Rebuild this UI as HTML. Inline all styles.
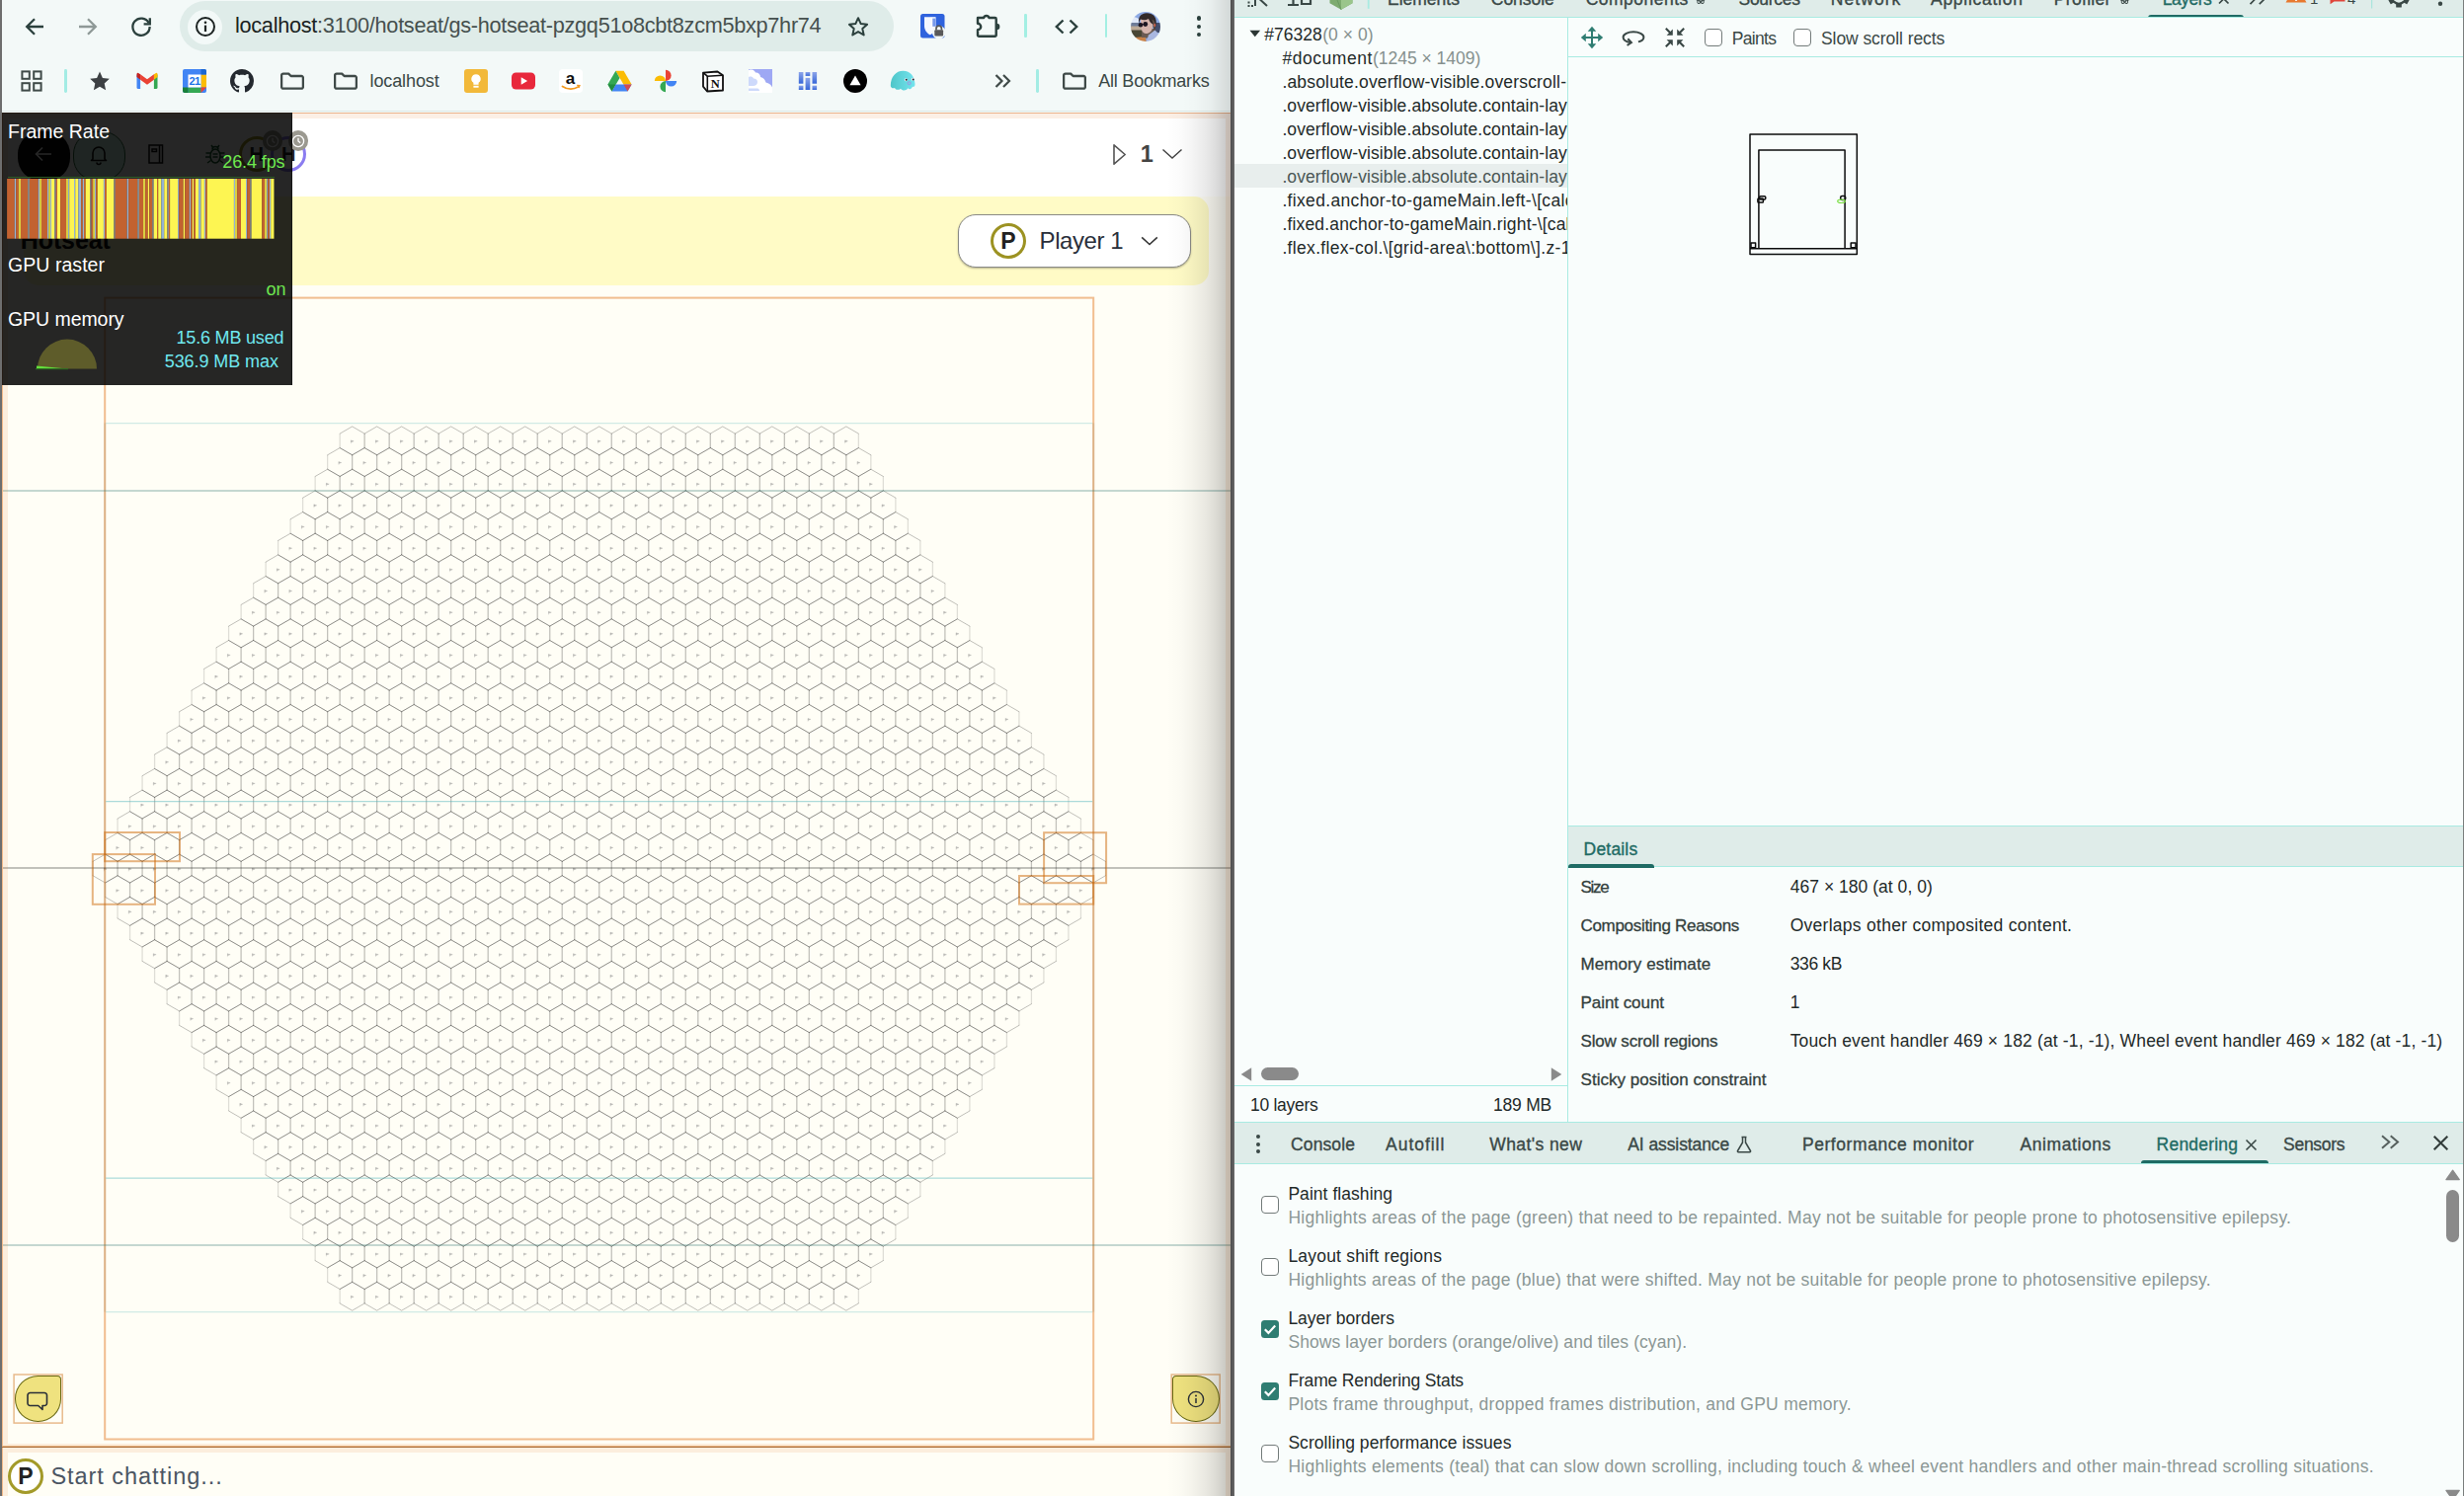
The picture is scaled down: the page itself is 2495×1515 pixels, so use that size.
<!DOCTYPE html><html><head><meta charset="utf-8"><title>Hotseat</title><style>
html,body{margin:0;padding:0}
body{width:2495px;height:1515px;overflow:hidden;position:relative;background:#f9fdfc;font-family:"Liberation Sans",sans-serif}
.t{position:absolute;white-space:nowrap;line-height:1;font-family:"Liberation Sans",sans-serif}
.clip{position:absolute;overflow:hidden}
</style></head><body>
<div style="position:absolute;left:2.00px;top:0.00px;width:1244.00px;height:114.00px;background:#f3f9f8;"></div>
<div style="position:absolute;left:2.00px;top:112.00px;width:1244.00px;height:1.00px;background:#dde9e7;"></div>
<div style="position:absolute;left:182.00px;top:1.00px;width:723.00px;height:51.00px;background:#dfece9;border-radius:25.5px;"></div>
<div style="position:absolute;left:190.00px;top:9.50px;width:35.00px;height:35.00px;background:#f3f9f8;border-radius:50%;"></div>
<svg style="position:absolute;left:23.00px;top:15.00px;" width="24" height="24" viewBox="0 0 24 24"><path d="M21 12H4.5M12 4.2L4.2 12l7.8 7.8" fill="none" stroke="#2b403d" stroke-width="2.3"/></svg>
<svg style="position:absolute;left:77.00px;top:15.00px;" width="24" height="24" viewBox="0 0 24 24"><path d="M3 12h16.5M12 4.2l7.8 7.8-7.8 7.8" fill="none" stroke="#8e9997" stroke-width="2.3"/></svg>
<svg style="position:absolute;left:131.00px;top:15.00px;" width="24" height="24" viewBox="0 0 24 24"><path d="M19.6 8.2A8.6 8.6 0 1 0 20.6 12" fill="none" stroke="#2b403d" stroke-width="2.3"/><path d="M20.8 3.2v6.2h-6.2" fill="none" stroke="#2b403d" stroke-width="2.3"/></svg>
<svg style="position:absolute;left:195.50px;top:15.00px;" width="24" height="24" viewBox="0 0 24 24"><circle cx="12" cy="12" r="9" fill="none" stroke="#1d2423" stroke-width="2"/><rect x="10.9" y="10.6" width="2.2" height="6.4" fill="#1d2423"/><circle cx="12" cy="7.8" r="1.3" fill="#1d2423"/></svg>
<div class="t" style="left:238.00px;top:15.23px;font-size:21.70px;color:#46504e;font-weight:400;letter-spacing:-0.288px;"><span id="t1"><span style="color:#1a2221">localhost</span>:3100/hotseat/gs-hotseat-pzgq51o8cbt8zcm5bxp7hr74</span></div>
<svg style="position:absolute;left:856.80px;top:15.00px;" width="24" height="24" viewBox="0 0 24 24"><path d="M12 3.2l2.7 5.9 6.4.7-4.8 4.3 1.4 6.3L12 17.1l-5.7 3.3 1.4-6.3-4.8-4.3 6.4-.7z" fill="none" stroke="#2b403d" stroke-width="2" stroke-linejoin="round"/></svg>
<svg style="position:absolute;left:932.30px;top:14.00px;" width="24.5" height="24.5" viewBox="0 0 24.5 24.5"><rect width="24.500" height="24.500" rx="2.500" fill="#2f63dd"/><path d="M4 3.300h11.500v9c0 4.500-3 7.700-5.750 9-2.750-1.300-5.750-4.500-5.750-9z" fill="#f4f8ff"/><path d="M12.300 4.600h2.900v8.200h-2.900z" fill="#2f63dd"/><path d="M9.750 3.300h5.750v9c0 4.500-3 7.700-5.750 9z" fill="#fff" opacity=".35"/><circle cx="18.700" cy="18.700" r="6.800" fill="#f2f8f7"/><rect x="14.300" y="16.200" width="8.800" height="6.300" rx="1" fill="#5a5a5a"/><path d="M16 16.500v-1.600a2.700 2.700 0 0 1 5.400 0v1.600" fill="none" stroke="#5a5a5a" stroke-width="1.700"/></svg>
<svg style="position:absolute;left:986.00px;top:12.00px;" width="28" height="28" viewBox="0 0 28 28"><path d="M4 6h6.200a2.700 2.700 0 0 1 5.200 0H21.500a1.200 1.200 0 0 1 1.200 1.200V23.600a1.200 1.200 0 0 1-1.200 1.200H5.200A1.200 1.200 0 0 1 4 23.600V18.200a3.200 3.200 0 0 0 0-6.400z" fill="none" stroke="#2b403d" stroke-width="2.400" stroke-linejoin="round"/><path d="M23.200 11.700a3.200 3.200 0 0 1 0 6.400z" fill="#2b403d"/></svg>
<div style="position:absolute;left:1037.10px;top:14.40px;width:2.60px;height:23.70px;background:#a3efe3;border-radius:1.300px;"></div>
<svg style="position:absolute;left:1067.70px;top:15.00px;" width="24" height="24" viewBox="0 0 24 24"><path d="M8.5 5.5L1.8 12l6.7 6.5M15.5 5.5l6.7 6.5-6.7 6.5" fill="none" stroke="#2b403d" stroke-width="2.4"/></svg>
<div style="position:absolute;left:1118.70px;top:14.40px;width:2.60px;height:23.70px;background:#a3efe3;border-radius:1.300px;"></div>
<svg style="position:absolute;left:1145.00px;top:11.90px;" width="30" height="30" viewBox="0 0 30 30"><defs><clipPath id="avc"><circle cx="15" cy="15" r="15"/></clipPath><filter id="avb" x="-10%" y="-10%" width="120%" height="120%"><feGaussianBlur stdDeviation=".7"/></filter></defs><g clip-path="url(#avc)"><g filter="url(#avb)"><rect x="-3" y="-3" width="36" height="36" fill="#8daae4"/><path d="M-3 6c4-2 8-1 11 1v4H-3z" fill="#dfe8f8"/><rect x="-3" y="11" width="36" height="5" fill="#6d7c98"/><rect x="-3" y="14.500" width="16" height="5" fill="#bba996"/><rect x="24" y="11" width="9" height="10" fill="#424d6c"/><path d="M-3 18.500h14l6 8H-3z" fill="#4a4636"/><path d="M3 26l12-1 1 8H3z" fill="#c8824a"/><rect x="11" y="17" width="14" height="9" fill="#6a5a52"/><path d="M15 33l3-9.500 6.500-5 4.500 4.500-2 10z" fill="#a9b7e0"/><path d="M10 8c0-3 5-4 9-3s4 6 3 11c-.5 3-2.500 5.500-5.500 6-3 .4-5-1.500-5.800-4.500z" fill="#d6b4ad"/><path d="M8.300 11.500C7 6 10 1.500 16 1.300c6-.2 10 3.500 9.800 9.500-.1 3-.6 6-1.800 8-1-1.500-1-3.500-1.200-6-2.500-1-4-3.500-4.800-5.800-2.500 1.500-6 1.500-8 .5-1 1-1.400 2.500-1.700 4z" fill="#30292c"/><path d="M21.500 7.500c2.500 1 3.500 4 3.300 7-.1 2-.5 3.500-1 4.500-.8-1.500-.8-3.500-1-6z" fill="#5e4e45"/><ellipse cx="24.300" cy="13.500" rx="1" ry="1.800" fill="#c8614c"/><circle cx="10" cy="13.300" r="2.300" fill="#1c1420"/><circle cx="14.800" cy="12.500" r="2.400" fill="#1c1420"/><path d="M12 12.600h1" stroke="#1c1420" stroke-width=".8"/></g></g></svg>
<div style="position:absolute;left:1211.70px;top:16.40px;width:4.40px;height:4.40px;background:#2b403d;border-radius:50%;"></div>
<div style="position:absolute;left:1211.70px;top:24.70px;width:4.40px;height:4.40px;background:#2b403d;border-radius:50%;"></div>
<div style="position:absolute;left:1211.70px;top:33.00px;width:4.40px;height:4.40px;background:#2b403d;border-radius:50%;"></div>
<svg style="position:absolute;left:20.00px;top:69.80px;" width="24" height="24" viewBox="0 0 24 24"><g fill="none" stroke="#3f4a48" stroke-width="2"><rect x="2.4" y="2.4" width="7.4" height="7.4"/><rect x="14.2" y="2.4" width="7.4" height="7.4"/><rect x="2.4" y="14.2" width="7.4" height="7.4"/><rect x="14.2" y="14.2" width="7.4" height="7.4"/></g></svg>
<div style="position:absolute;left:65.20px;top:70.00px;width:2.80px;height:23.50px;background:#a3ece4;border-radius:1.4px;"></div>
<svg style="position:absolute;left:89.00px;top:69.80px;" width="24" height="24" viewBox="0 0 24 24"><path d="M12 2.6l2.9 6.3 6.9.8-5.1 4.7 1.4 6.8L12 17.8l-6.1 3.4 1.4-6.8-5.1-4.7 6.9-.8z" fill="#3c4043"/></svg>
<svg style="position:absolute;left:137.00px;top:69.80px;" width="24" height="24" viewBox="0 0 24 24"><path d="M1.5 5.5h3.6V20H3a1.5 1.5 0 0 1-1.5-1.5z" fill="#4285f4"/><path d="M18.9 5.5h3.6v13A1.5 1.5 0 0 1 21 20h-2.1z" fill="#34a853"/><path d="M18.9 5.2l2-1.2a1.1 1.1 0 0 1 1.6 1v3l-3.6 2.7z" fill="#fbbc04"/><path d="M5.1 5.2l-2-1.2a1.1 1.1 0 0 0-1.6 1v3l3.6 2.7z" fill="#c5221f"/><path d="M5.1 5.2v5.5L12 15.8l6.9-5.1V5.2L12 10.3z" fill="#ea4335"/></svg>
<svg style="position:absolute;left:185.00px;top:69.80px;" width="24" height="24" viewBox="0 0 24 24"><rect x="0" y="0" width="24" height="24" rx="2" fill="#4285f4"/><rect x="18.5" y="5.5" width="5.5" height="13" fill="#fbbc04"/><rect x="5.5" y="18.5" width="13" height="5.5" fill="#34a853"/><path d="M0 18.5h5.5V24H2a2 2 0 0 1-2-2z" fill="#188038"/><path d="M18.5 18.5H24L18.5 24z" fill="#ea4335"/><path d="M18.5 0H22a2 2 0 0 1 2 2v3.5h-5.5z" fill="#1967d2"/><rect x="5.5" y="5.5" width="13" height="13" fill="#fff"/><text x="12" y="16.2" font-family="Liberation Sans,sans-serif" font-size="11" font-weight="700" fill="#1a73e8" text-anchor="middle" letter-spacing="-0.6">21</text></svg>
<svg style="position:absolute;left:232.80px;top:69.80px;" width="24" height="24" viewBox="0 0 16 16"><path d="M8 0C3.58 0 0 3.58 0 8c0 3.54 2.29 6.53 5.47 7.59.4.07.55-.17.55-.38 0-.19-.01-.82-.01-1.49-2.01.37-2.53-.49-2.69-.94-.09-.23-.48-.94-.82-1.13-.28-.15-.68-.52-.01-.53.63-.01 1.08.58 1.23.82.72 1.21 1.87.87 2.33.66.07-.52.28-.87.51-1.07-1.78-.2-3.64-.89-3.64-3.95 0-.87.31-1.59.82-2.15-.08-.2-.36-1.02.08-2.12 0 0 .67-.21 2.2.82.64-.18 1.32-.27 2-.27s1.36.09 2 .27c1.53-1.04 2.2-.82 2.2-.82.44 1.1.16 1.92.08 2.12.51.56.82 1.27.82 2.15 0 3.07-1.87 3.75-3.65 3.95.29.25.54.73.54 1.48 0 1.07-.01 1.93-.01 2.2 0 .21.15.46.55.38A8.01 8.01 0 0 0 16 8c0-4.42-3.58-8-8-8z" fill="#24292f"/></svg>
<svg style="position:absolute;left:283.80px;top:69.80px;" width="24" height="24" viewBox="0 0 24 24"><path d="M1.100 6.300a1.700 1.700 0 0 1 1.700-1.700h5.400l2.400 2.400h10.600a1.700 1.700 0 0 1 1.700 1.700v9.300a1.700 1.700 0 0 1-1.700 1.700H2.800a1.700 1.700 0 0 1-1.700-1.700z" fill="none" stroke="#3f4a48" stroke-width="2.300" stroke-linejoin="round"/></svg>
<svg style="position:absolute;left:337.60px;top:69.80px;" width="24" height="24" viewBox="0 0 24 24"><path d="M1.100 6.300a1.700 1.700 0 0 1 1.700-1.700h5.400l2.400 2.400h10.600a1.700 1.700 0 0 1 1.700 1.700v9.300a1.700 1.700 0 0 1-1.700 1.700H2.800a1.700 1.700 0 0 1-1.700-1.700z" fill="none" stroke="#3f4a48" stroke-width="2.300" stroke-linejoin="round"/></svg>
<div class="t" style="left:374.50px;top:72.56px;font-size:18.00px;color:#3a4846;font-weight:400;letter-spacing:-0.106px;"><span id="t2">localhost</span></div>
<svg style="position:absolute;left:469.80px;top:69.80px;" width="24" height="24" viewBox="0 0 24 24"><rect width="24" height="24" rx="3" fill="#f2b93a"/><path d="M12 5.200a4.700 4.700 0 0 0-2.600 8.600v2h5.200v-2A4.700 4.700 0 0 0 12 5.200z" fill="#fff"/><rect x="9.400" y="16.800" width="5.200" height="1.900" fill="#fff"/></svg>
<svg style="position:absolute;left:517.90px;top:69.80px;" width="24" height="24" viewBox="0 0 24 24"><rect x="0" y="3.500" width="24" height="17" rx="4.500" fill="#e8283c"/><path d="M9.700 8.300l6.400 3.700-6.400 3.700z" fill="#fff"/></svg>
<svg style="position:absolute;left:565.90px;top:69.80px;" width="24" height="24" viewBox="0 0 24 24"><rect width="24" height="24" rx="4" fill="#fff"/><text x="11.6" y="14.8" font-family="Liberation Sans,sans-serif" font-size="17" font-weight="700" fill="#111" text-anchor="middle">a</text><path d="M3.500 17.500c5 3.200 11.500 3.200 16.500.3" fill="none" stroke="#f39a1e" stroke-width="1.800" stroke-linecap="round"/><path d="M18.200 16.400l2.700.2-1 2.500" fill="none" stroke="#f39a1e" stroke-width="1.400"/></svg>
<svg style="position:absolute;left:614.50px;top:69.80px;" width="25" height="24" viewBox="0 0 25 24"><path d="M8.400 1.800h8.200l8 13.800h-8.200z" fill="#fbbc04"/><path d="M8.400 1.800L.400 15.600l4.100 7 8-13.700z" fill="#34a853"/><path d="M4.500 22.600l4.100-7h16l-4.100 7z" fill="#4285f4"/><path d="M16.400 15.600h8.200l-4.100 7z" fill="#ea4335" opacity=".85"/><path d="M8.600 15.600L4.500 22.600.400 15.600z" fill="#188038" opacity=".7"/></svg>
<svg style="position:absolute;left:662.00px;top:69.80px;" width="24" height="24" viewBox="0 0 24 24"><path d="M12 12V.800a5.600 5.600 0 0 1 0 11.200z" fill="#ea4335"/><path d="M12 12H.800a5.600 5.600 0 0 1 11.200 0z" fill="#fbbc04"/><path d="M12 12v11.200a5.600 5.600 0 0 1 0-11.200z" fill="#34a853"/><path d="M12 12h11.200a5.600 5.600 0 0 1-11.200 0z" fill="#4285f4"/></svg>
<svg style="position:absolute;left:710.00px;top:69.80px;" width="24" height="24" viewBox="0 0 24 24"><path d="M2 3.600l14.500-1.100 5.500 3.800v15.200l-16 1-4-4.800z" fill="#fff" stroke="#111" stroke-width="1.800" stroke-linejoin="round"/><path d="M2.300 3.800l4 3.400 15.500-1" fill="none" stroke="#111" stroke-width="1.600"/><path d="M6.300 7.200v15" stroke="#111" stroke-width="1.600"/><text x="14.2" y="19.200" font-family="Liberation Serif,serif" font-size="12.500" font-weight="700" fill="#111" text-anchor="middle">N</text></svg>
<svg style="position:absolute;left:758.00px;top:69.70px;" width="24" height="24" viewBox="0 0 24 24"><rect width="24" height="24" fill="#9ea8f4"/><path d="M0 1c3-1 6 0 7 2.500 3 0 5 2 5 4.500 3 .5 5 3 5.500 5.500 3 .5 5.500 2.500 6.500 5V24H0z" fill="#fff"/><path d="M0 8c2-1 4-.5 5 1.500 2.500 0 4 1.500 4 3.500 0 2.500-2 4-4.500 4H0z" fill="#cdd9fb"/><path d="M0 19.500h9c1 0 2 1 2 2.500H0z" fill="#cdd9fb"/></svg>
<svg style="position:absolute;left:806.00px;top:69.80px;" width="24" height="24" viewBox="0 0 24 24"><defs><linearGradient id="bg1" x1="0" y1="0" x2="0" y2="1"><stop offset="0" stop-color="#8ea6ea"/><stop offset="1" stop-color="#3566d8"/></linearGradient></defs><g fill="url(#bg1)"><rect x="2.800" y="3" width="4.600" height="11.700"/><rect x="2.800" y="16.700" width="4.600" height="4.300"/><rect x="9.600" y="3" width="4.700" height="3.900"/><rect x="9.600" y="8.900" width="4.700" height="12.100"/><rect x="16.500" y="3" width="4.600" height="11.700"/><rect x="16.500" y="16.700" width="4.600" height="4.300"/></g></svg>
<svg style="position:absolute;left:854.00px;top:69.80px;" width="24" height="24" viewBox="0 0 24 24"><circle cx="12" cy="12" r="12" fill="#000"/><path d="M12 6.400l5.600 9.800H6.400z" fill="#fff"/></svg>
<svg style="position:absolute;left:901.00px;top:69.80px;" width="27" height="24" viewBox="0 0 27 24"><defs><linearGradient id="tb" x1="0" y1="0" x2="1" y2="0"><stop offset="0" stop-color="#4ec6c9"/><stop offset="1" stop-color="#74e4ee"/></linearGradient></defs><path d="M.8 16.500C1 8 6 1.800 13.500 1.800S25 7.500 25.500 15c.2 2.300-1.200 3.300-2.600 2.800-.8 2.800-3.400 3-4.600 1.400-1.500 2.800-5.500 3-7.300.5-2 1.800-5 1.500-6-.7C3 20 .7 18.800.8 16.500z" fill="url(#tb)"/><circle cx="16.300" cy="10.700" r="1.500" fill="#fff"/><circle cx="23.400" cy="10.300" r="1.500" fill="#fff"/><circle cx="16.700" cy="10.800" r="1" fill="#1a1a2a"/><circle cx="23.700" cy="10.400" r="1" fill="#1a1a2a"/><circle cx="19.600" cy="14.200" r="1.500" fill="none" stroke="#a98be0" stroke-width=".9"/></svg>
<svg style="position:absolute;left:1003.30px;top:69.80px;" width="24" height="24" viewBox="0 0 24 24"><path d="M5.500 6l6 6-6 6M13 6l6 6-6 6" fill="none" stroke="#3f4a48" stroke-width="2.200"/></svg>
<div style="position:absolute;left:1049.00px;top:70.00px;width:2.80px;height:23.50px;background:#a3ece4;border-radius:1.400px;"></div>
<svg style="position:absolute;left:1075.50px;top:69.80px;" width="24" height="24" viewBox="0 0 24 24"><path d="M1.100 6.300a1.700 1.700 0 0 1 1.700-1.700h5.400l2.400 2.400h10.600a1.700 1.700 0 0 1 1.700 1.700v9.300a1.700 1.700 0 0 1-1.700 1.700H2.800a1.700 1.700 0 0 1-1.700-1.700z" fill="none" stroke="#3f4a48" stroke-width="2.300" stroke-linejoin="round"/></svg>
<div class="t" style="left:1112.20px;top:72.56px;font-size:18.00px;color:#3a4846;font-weight:400;letter-spacing:-0.211px;"><span id="t3">All Bookmarks</span></div>
<div style="position:absolute;left:2.00px;top:114.00px;width:1244.00px;height:1401.00px;background:#fffef6;"></div>
<div style="position:absolute;left:2.00px;top:114.00px;width:1244.00px;height:85.00px;background:#ffffff;"></div>
<div style="position:absolute;left:24.00px;top:199.00px;width:1200.00px;height:90.00px;background:#fffbc6;border-radius:15px;"></div>
<div style="position:absolute;left:18.20px;top:132.50px;width:52.80px;height:50.00px;background:#0a0a0a;border-radius:23px;"></div>
<svg style="position:absolute;left:32.00px;top:144.00px;" width="24" height="24" viewBox="0 0 24 24"><path d="M20 12H5M11 5.500L4.500 12l6.500 6.500" fill="none" stroke="#fff" stroke-width="1.600"/></svg>
<div style="position:absolute;left:74.00px;top:132.50px;width:52.50px;height:50.00px;background:#cff5e6;border-radius:23px;box-sizing:border-box;border:1px solid #2c6a40;"></div>
<svg style="position:absolute;left:88.00px;top:144.00px;" width="24" height="24" viewBox="0 0 24 24"><path d="M6 17v-6a6 6 0 0 1 12 0v6l1.500 1.500h-15zM10 20.500a2 2 0 0 0 4 0" fill="none" stroke="#111" stroke-width="1.600" stroke-linejoin="round"/></svg>
<svg style="position:absolute;left:146.00px;top:144.00px;" width="24" height="24" viewBox="0 0 24 24"><path d="M5 3h13.500v18H5zM15.500 3v18M8 7h4.500v2.500H8z" fill="none" stroke="#111" stroke-width="1.500"/></svg>
<svg style="position:absolute;left:206.00px;top:143.00px;" width="24" height="26" viewBox="0 0 24 26"><g fill="none" stroke="#1a5a30" stroke-width="1.500"><ellipse cx="12" cy="15" rx="5" ry="7"/><path d="M9 8.500a3 3 0 0 1 6 0M8 4l2 3M16 4l-2 3M7 12H2.500M7 16H2M7.500 19.500L4 22M17 12h4.500M17 16h5M16.500 19.500L20 22M9.500 13h5M9.500 16h5"/></g></svg>
<div style="position:absolute;left:241.50px;top:137.50px;width:36.00px;height:36.00px;background:#fff;border-radius:50%;box-sizing:border-box;border:3.500px solid #a39a28;"></div>
<div class="t" style="left:252.50px;top:146.07px;font-size:20.00px;color:#222;font-weight:700;letter-spacing:0.000px;"><span id="t4">H</span></div>
<div style="position:absolute;left:274.00px;top:137.50px;width:36.00px;height:36.00px;background:#fff;border-radius:50%;box-sizing:border-box;border:3.500px solid #8b7cf0;"></div>
<div class="t" style="left:285.00px;top:146.07px;font-size:20.00px;color:#222;font-weight:700;letter-spacing:0.000px;"><span id="t5">H</span></div>
<div style="position:absolute;left:265.60px;top:132.20px;width:20.80px;height:20.80px;background:#9b9990;border-radius:50%;"></div>
<svg style="position:absolute;left:269.00px;top:135.60px;" width="14" height="14" viewBox="0 0 14 14"><circle cx="7" cy="7" r="5.600" fill="none" stroke="#fff" stroke-width="1.300"/><path d="M7 3.800V7l2.200 1.600" fill="none" stroke="#fff" stroke-width="1.300"/></svg>
<div style="position:absolute;left:291.60px;top:132.20px;width:20.80px;height:20.80px;background:#9b9990;border-radius:50%;"></div>
<svg style="position:absolute;left:295.00px;top:135.60px;" width="14" height="14" viewBox="0 0 14 14"><circle cx="7" cy="7" r="5.600" fill="none" stroke="#fff" stroke-width="1.300"/><path d="M7 3.800V7l2.200 1.600" fill="none" stroke="#fff" stroke-width="1.300"/></svg>
<div class="t" style="left:20.80px;top:230.84px;font-size:25.00px;color:#111;font-weight:700;letter-spacing:-0.115px;"><span id="t6">Hotseat</span></div>
<svg style="position:absolute;left:1126.00px;top:145.00px;" width="16" height="23" viewBox="0 0 16 23"><path d="M2 1.800L13.200 11.500 2 21.200z" fill="none" stroke="#555" stroke-width="1.600" stroke-linejoin="round"/></svg>
<div class="t" style="left:1154.80px;top:144.61px;font-size:23.50px;color:#444;font-weight:700;letter-spacing:0.000px;"><span id="t7">1</span></div>
<svg style="position:absolute;left:1176.00px;top:150.00px;" width="22" height="12" viewBox="0 0 22 12"><path d="M1.500 1.500L11 10 20.500 1.500" fill="none" stroke="#444" stroke-width="1.450"/></svg>
<div style="position:absolute;left:970.00px;top:217.00px;width:236.00px;height:54.40px;background:#fff;border-radius:18px;box-sizing:border-box;border:1px solid #8a8a86;box-shadow:0 1px 2px rgba(0,0,0,.28);"></div>
<div style="position:absolute;left:1003.00px;top:226.00px;width:36.00px;height:36.00px;background:#fff;border-radius:50%;box-sizing:border-box;border:3.400px solid #9c9222;"></div>
<div class="t" style="left:1013.20px;top:232.53px;font-size:23.00px;color:#222;font-weight:700;letter-spacing:0.000px;"><span id="t8">P</span></div>
<div class="t" style="left:1052.60px;top:231.68px;font-size:24.00px;color:#2a2f3a;font-weight:400;letter-spacing:-0.435px;"><span id="t9">Player 1</span></div>
<svg style="position:absolute;left:1155.00px;top:238.50px;" width="18" height="11" viewBox="0 0 18 11"><path d="M1.200 1.400L9 8.600 16.800 1.400" fill="none" stroke="#333" stroke-width="1.500"/></svg>
<svg style="position:absolute;left:0;top:0" width="1246" height="1515" viewBox="0 0 1246 1515"><defs><g id="hx"><path d="M-12.505 -7.220L0 -14.440L12.505 -7.220M-12.505 7.220L0 14.440L12.505 7.220" fill="none" stroke="#000" stroke-opacity=".28" stroke-width=".9" stroke-linecap="round"/><path d="M-12.505 -7.220V7.220M12.505 -7.220V7.220" fill="none" stroke="#000" stroke-opacity=".125" stroke-width="1.300"/><path d="M-1.200-.5L1.600.5-1.200 1.600zM-1.200-.5v3.400" fill="#8a8a8a" fill-opacity=".5" stroke="#8a8a8a" stroke-opacity=".5" stroke-width=".4"/></g></defs><use href="#hx" x="356.65" y="446.36"/><use href="#hx" x="381.66" y="446.36"/><use href="#hx" x="406.67" y="446.36"/><use href="#hx" x="431.68" y="446.36"/><use href="#hx" x="456.69" y="446.36"/><use href="#hx" x="481.70" y="446.36"/><use href="#hx" x="506.71" y="446.36"/><use href="#hx" x="531.72" y="446.36"/><use href="#hx" x="556.73" y="446.36"/><use href="#hx" x="581.74" y="446.36"/><use href="#hx" x="606.75" y="446.36"/><use href="#hx" x="631.76" y="446.36"/><use href="#hx" x="656.77" y="446.36"/><use href="#hx" x="681.78" y="446.36"/><use href="#hx" x="706.79" y="446.36"/><use href="#hx" x="731.80" y="446.36"/><use href="#hx" x="756.81" y="446.36"/><use href="#hx" x="781.82" y="446.36"/><use href="#hx" x="806.83" y="446.36"/><use href="#hx" x="831.84" y="446.36"/><use href="#hx" x="856.85" y="446.36"/><use href="#hx" x="344.14" y="468.02"/><use href="#hx" x="369.15" y="468.02"/><use href="#hx" x="394.16" y="468.02"/><use href="#hx" x="419.17" y="468.02"/><use href="#hx" x="444.19" y="468.02"/><use href="#hx" x="469.19" y="468.02"/><use href="#hx" x="494.20" y="468.02"/><use href="#hx" x="519.22" y="468.02"/><use href="#hx" x="544.23" y="468.02"/><use href="#hx" x="569.24" y="468.02"/><use href="#hx" x="594.25" y="468.02"/><use href="#hx" x="619.25" y="468.02"/><use href="#hx" x="644.26" y="468.02"/><use href="#hx" x="669.27" y="468.02"/><use href="#hx" x="694.29" y="468.02"/><use href="#hx" x="719.30" y="468.02"/><use href="#hx" x="744.31" y="468.02"/><use href="#hx" x="769.32" y="468.02"/><use href="#hx" x="794.33" y="468.02"/><use href="#hx" x="819.34" y="468.02"/><use href="#hx" x="844.35" y="468.02"/><use href="#hx" x="869.36" y="468.02"/><use href="#hx" x="331.64" y="489.68"/><use href="#hx" x="356.65" y="489.68"/><use href="#hx" x="381.66" y="489.68"/><use href="#hx" x="406.67" y="489.68"/><use href="#hx" x="431.68" y="489.68"/><use href="#hx" x="456.69" y="489.68"/><use href="#hx" x="481.70" y="489.68"/><use href="#hx" x="506.71" y="489.68"/><use href="#hx" x="531.72" y="489.68"/><use href="#hx" x="556.73" y="489.68"/><use href="#hx" x="581.74" y="489.68"/><use href="#hx" x="606.75" y="489.68"/><use href="#hx" x="631.76" y="489.68"/><use href="#hx" x="656.77" y="489.68"/><use href="#hx" x="681.78" y="489.68"/><use href="#hx" x="706.79" y="489.68"/><use href="#hx" x="731.80" y="489.68"/><use href="#hx" x="756.81" y="489.68"/><use href="#hx" x="781.82" y="489.68"/><use href="#hx" x="806.83" y="489.68"/><use href="#hx" x="831.84" y="489.68"/><use href="#hx" x="856.85" y="489.68"/><use href="#hx" x="881.86" y="489.68"/><use href="#hx" x="319.13" y="511.34"/><use href="#hx" x="344.14" y="511.34"/><use href="#hx" x="369.15" y="511.34"/><use href="#hx" x="394.16" y="511.34"/><use href="#hx" x="419.18" y="511.34"/><use href="#hx" x="444.19" y="511.34"/><use href="#hx" x="469.19" y="511.34"/><use href="#hx" x="494.21" y="511.34"/><use href="#hx" x="519.22" y="511.34"/><use href="#hx" x="544.23" y="511.34"/><use href="#hx" x="569.24" y="511.34"/><use href="#hx" x="594.25" y="511.34"/><use href="#hx" x="619.25" y="511.34"/><use href="#hx" x="644.26" y="511.34"/><use href="#hx" x="669.28" y="511.34"/><use href="#hx" x="694.29" y="511.34"/><use href="#hx" x="719.30" y="511.34"/><use href="#hx" x="744.31" y="511.34"/><use href="#hx" x="769.32" y="511.34"/><use href="#hx" x="794.33" y="511.34"/><use href="#hx" x="819.34" y="511.34"/><use href="#hx" x="844.35" y="511.34"/><use href="#hx" x="869.36" y="511.34"/><use href="#hx" x="894.37" y="511.34"/><use href="#hx" x="306.63" y="533.00"/><use href="#hx" x="331.64" y="533.00"/><use href="#hx" x="356.65" y="533.00"/><use href="#hx" x="381.66" y="533.00"/><use href="#hx" x="406.67" y="533.00"/><use href="#hx" x="431.68" y="533.00"/><use href="#hx" x="456.69" y="533.00"/><use href="#hx" x="481.70" y="533.00"/><use href="#hx" x="506.71" y="533.00"/><use href="#hx" x="531.72" y="533.00"/><use href="#hx" x="556.73" y="533.00"/><use href="#hx" x="581.74" y="533.00"/><use href="#hx" x="606.75" y="533.00"/><use href="#hx" x="631.76" y="533.00"/><use href="#hx" x="656.77" y="533.00"/><use href="#hx" x="681.78" y="533.00"/><use href="#hx" x="706.79" y="533.00"/><use href="#hx" x="731.80" y="533.00"/><use href="#hx" x="756.81" y="533.00"/><use href="#hx" x="781.82" y="533.00"/><use href="#hx" x="806.83" y="533.00"/><use href="#hx" x="831.84" y="533.00"/><use href="#hx" x="856.85" y="533.00"/><use href="#hx" x="881.86" y="533.00"/><use href="#hx" x="906.87" y="533.00"/><use href="#hx" x="294.12" y="554.66"/><use href="#hx" x="319.13" y="554.66"/><use href="#hx" x="344.14" y="554.66"/><use href="#hx" x="369.15" y="554.66"/><use href="#hx" x="394.17" y="554.66"/><use href="#hx" x="419.18" y="554.66"/><use href="#hx" x="444.19" y="554.66"/><use href="#hx" x="469.20" y="554.66"/><use href="#hx" x="494.21" y="554.66"/><use href="#hx" x="519.22" y="554.66"/><use href="#hx" x="544.23" y="554.66"/><use href="#hx" x="569.24" y="554.66"/><use href="#hx" x="594.25" y="554.66"/><use href="#hx" x="619.25" y="554.66"/><use href="#hx" x="644.27" y="554.66"/><use href="#hx" x="669.28" y="554.66"/><use href="#hx" x="694.29" y="554.66"/><use href="#hx" x="719.30" y="554.66"/><use href="#hx" x="744.31" y="554.66"/><use href="#hx" x="769.32" y="554.66"/><use href="#hx" x="794.33" y="554.66"/><use href="#hx" x="819.34" y="554.66"/><use href="#hx" x="844.35" y="554.66"/><use href="#hx" x="869.36" y="554.66"/><use href="#hx" x="894.37" y="554.66"/><use href="#hx" x="919.38" y="554.66"/><use href="#hx" x="281.62" y="576.32"/><use href="#hx" x="306.63" y="576.32"/><use href="#hx" x="331.64" y="576.32"/><use href="#hx" x="356.65" y="576.32"/><use href="#hx" x="381.66" y="576.32"/><use href="#hx" x="406.67" y="576.32"/><use href="#hx" x="431.68" y="576.32"/><use href="#hx" x="456.69" y="576.32"/><use href="#hx" x="481.70" y="576.32"/><use href="#hx" x="506.71" y="576.32"/><use href="#hx" x="531.72" y="576.32"/><use href="#hx" x="556.73" y="576.32"/><use href="#hx" x="581.74" y="576.32"/><use href="#hx" x="606.75" y="576.32"/><use href="#hx" x="631.76" y="576.32"/><use href="#hx" x="656.77" y="576.32"/><use href="#hx" x="681.78" y="576.32"/><use href="#hx" x="706.79" y="576.32"/><use href="#hx" x="731.80" y="576.32"/><use href="#hx" x="756.81" y="576.32"/><use href="#hx" x="781.82" y="576.32"/><use href="#hx" x="806.83" y="576.32"/><use href="#hx" x="831.84" y="576.32"/><use href="#hx" x="856.85" y="576.32"/><use href="#hx" x="881.86" y="576.32"/><use href="#hx" x="906.87" y="576.32"/><use href="#hx" x="931.88" y="576.32"/><use href="#hx" x="269.11" y="597.98"/><use href="#hx" x="294.12" y="597.98"/><use href="#hx" x="319.13" y="597.98"/><use href="#hx" x="344.14" y="597.98"/><use href="#hx" x="369.15" y="597.98"/><use href="#hx" x="394.16" y="597.98"/><use href="#hx" x="419.17" y="597.98"/><use href="#hx" x="444.18" y="597.98"/><use href="#hx" x="469.19" y="597.98"/><use href="#hx" x="494.20" y="597.98"/><use href="#hx" x="519.21" y="597.98"/><use href="#hx" x="544.22" y="597.98"/><use href="#hx" x="569.23" y="597.98"/><use href="#hx" x="594.24" y="597.98"/><use href="#hx" x="619.25" y="597.98"/><use href="#hx" x="644.26" y="597.98"/><use href="#hx" x="669.27" y="597.98"/><use href="#hx" x="694.28" y="597.98"/><use href="#hx" x="719.29" y="597.98"/><use href="#hx" x="744.31" y="597.98"/><use href="#hx" x="769.32" y="597.98"/><use href="#hx" x="794.33" y="597.98"/><use href="#hx" x="819.34" y="597.98"/><use href="#hx" x="844.35" y="597.98"/><use href="#hx" x="869.36" y="597.98"/><use href="#hx" x="894.37" y="597.98"/><use href="#hx" x="919.38" y="597.98"/><use href="#hx" x="944.38" y="597.98"/><use href="#hx" x="256.61" y="619.64"/><use href="#hx" x="281.62" y="619.64"/><use href="#hx" x="306.63" y="619.64"/><use href="#hx" x="331.64" y="619.64"/><use href="#hx" x="356.65" y="619.64"/><use href="#hx" x="381.66" y="619.64"/><use href="#hx" x="406.67" y="619.64"/><use href="#hx" x="431.68" y="619.64"/><use href="#hx" x="456.69" y="619.64"/><use href="#hx" x="481.70" y="619.64"/><use href="#hx" x="506.71" y="619.64"/><use href="#hx" x="531.72" y="619.64"/><use href="#hx" x="556.73" y="619.64"/><use href="#hx" x="581.74" y="619.64"/><use href="#hx" x="606.75" y="619.64"/><use href="#hx" x="631.76" y="619.64"/><use href="#hx" x="656.77" y="619.64"/><use href="#hx" x="681.78" y="619.64"/><use href="#hx" x="706.79" y="619.64"/><use href="#hx" x="731.80" y="619.64"/><use href="#hx" x="756.81" y="619.64"/><use href="#hx" x="781.82" y="619.64"/><use href="#hx" x="806.83" y="619.64"/><use href="#hx" x="831.84" y="619.64"/><use href="#hx" x="856.85" y="619.64"/><use href="#hx" x="881.86" y="619.64"/><use href="#hx" x="906.87" y="619.64"/><use href="#hx" x="931.88" y="619.64"/><use href="#hx" x="956.89" y="619.64"/><use href="#hx" x="244.10" y="641.30"/><use href="#hx" x="269.11" y="641.30"/><use href="#hx" x="294.12" y="641.30"/><use href="#hx" x="319.13" y="641.30"/><use href="#hx" x="344.14" y="641.30"/><use href="#hx" x="369.15" y="641.30"/><use href="#hx" x="394.16" y="641.30"/><use href="#hx" x="419.17" y="641.30"/><use href="#hx" x="444.18" y="641.30"/><use href="#hx" x="469.19" y="641.30"/><use href="#hx" x="494.20" y="641.30"/><use href="#hx" x="519.21" y="641.30"/><use href="#hx" x="544.22" y="641.30"/><use href="#hx" x="569.23" y="641.30"/><use href="#hx" x="594.25" y="641.30"/><use href="#hx" x="619.25" y="641.30"/><use href="#hx" x="644.26" y="641.30"/><use href="#hx" x="669.27" y="641.30"/><use href="#hx" x="694.28" y="641.30"/><use href="#hx" x="719.30" y="641.30"/><use href="#hx" x="744.31" y="641.30"/><use href="#hx" x="769.32" y="641.30"/><use href="#hx" x="794.33" y="641.30"/><use href="#hx" x="819.34" y="641.30"/><use href="#hx" x="844.35" y="641.30"/><use href="#hx" x="869.36" y="641.30"/><use href="#hx" x="894.37" y="641.30"/><use href="#hx" x="919.38" y="641.30"/><use href="#hx" x="944.38" y="641.30"/><use href="#hx" x="969.39" y="641.30"/><use href="#hx" x="231.60" y="662.96"/><use href="#hx" x="256.61" y="662.96"/><use href="#hx" x="281.62" y="662.96"/><use href="#hx" x="306.63" y="662.96"/><use href="#hx" x="331.64" y="662.96"/><use href="#hx" x="356.65" y="662.96"/><use href="#hx" x="381.66" y="662.96"/><use href="#hx" x="406.67" y="662.96"/><use href="#hx" x="431.68" y="662.96"/><use href="#hx" x="456.69" y="662.96"/><use href="#hx" x="481.70" y="662.96"/><use href="#hx" x="506.71" y="662.96"/><use href="#hx" x="531.72" y="662.96"/><use href="#hx" x="556.73" y="662.96"/><use href="#hx" x="581.74" y="662.96"/><use href="#hx" x="606.75" y="662.96"/><use href="#hx" x="631.76" y="662.96"/><use href="#hx" x="656.77" y="662.96"/><use href="#hx" x="681.78" y="662.96"/><use href="#hx" x="706.79" y="662.96"/><use href="#hx" x="731.80" y="662.96"/><use href="#hx" x="756.81" y="662.96"/><use href="#hx" x="781.82" y="662.96"/><use href="#hx" x="806.83" y="662.96"/><use href="#hx" x="831.84" y="662.96"/><use href="#hx" x="856.85" y="662.96"/><use href="#hx" x="881.86" y="662.96"/><use href="#hx" x="906.87" y="662.96"/><use href="#hx" x="931.88" y="662.96"/><use href="#hx" x="956.89" y="662.96"/><use href="#hx" x="981.90" y="662.96"/><use href="#hx" x="219.09" y="684.62"/><use href="#hx" x="244.10" y="684.62"/><use href="#hx" x="269.11" y="684.62"/><use href="#hx" x="294.12" y="684.62"/><use href="#hx" x="319.13" y="684.62"/><use href="#hx" x="344.14" y="684.62"/><use href="#hx" x="369.15" y="684.62"/><use href="#hx" x="394.16" y="684.62"/><use href="#hx" x="419.17" y="684.62"/><use href="#hx" x="444.18" y="684.62"/><use href="#hx" x="469.19" y="684.62"/><use href="#hx" x="494.20" y="684.62"/><use href="#hx" x="519.21" y="684.62"/><use href="#hx" x="544.22" y="684.62"/><use href="#hx" x="569.24" y="684.62"/><use href="#hx" x="594.25" y="684.62"/><use href="#hx" x="619.25" y="684.62"/><use href="#hx" x="644.26" y="684.62"/><use href="#hx" x="669.27" y="684.62"/><use href="#hx" x="694.29" y="684.62"/><use href="#hx" x="719.30" y="684.62"/><use href="#hx" x="744.31" y="684.62"/><use href="#hx" x="769.32" y="684.62"/><use href="#hx" x="794.33" y="684.62"/><use href="#hx" x="819.34" y="684.62"/><use href="#hx" x="844.35" y="684.62"/><use href="#hx" x="869.36" y="684.62"/><use href="#hx" x="894.37" y="684.62"/><use href="#hx" x="919.38" y="684.62"/><use href="#hx" x="944.38" y="684.62"/><use href="#hx" x="969.39" y="684.62"/><use href="#hx" x="994.40" y="684.62"/><use href="#hx" x="206.59" y="706.28"/><use href="#hx" x="231.60" y="706.28"/><use href="#hx" x="256.61" y="706.28"/><use href="#hx" x="281.62" y="706.28"/><use href="#hx" x="306.63" y="706.28"/><use href="#hx" x="331.64" y="706.28"/><use href="#hx" x="356.65" y="706.28"/><use href="#hx" x="381.66" y="706.28"/><use href="#hx" x="406.67" y="706.28"/><use href="#hx" x="431.68" y="706.28"/><use href="#hx" x="456.69" y="706.28"/><use href="#hx" x="481.70" y="706.28"/><use href="#hx" x="506.71" y="706.28"/><use href="#hx" x="531.72" y="706.28"/><use href="#hx" x="556.73" y="706.28"/><use href="#hx" x="581.74" y="706.28"/><use href="#hx" x="606.75" y="706.28"/><use href="#hx" x="631.76" y="706.28"/><use href="#hx" x="656.77" y="706.28"/><use href="#hx" x="681.78" y="706.28"/><use href="#hx" x="706.79" y="706.28"/><use href="#hx" x="731.80" y="706.28"/><use href="#hx" x="756.81" y="706.28"/><use href="#hx" x="781.82" y="706.28"/><use href="#hx" x="806.83" y="706.28"/><use href="#hx" x="831.84" y="706.28"/><use href="#hx" x="856.85" y="706.28"/><use href="#hx" x="881.86" y="706.28"/><use href="#hx" x="906.87" y="706.28"/><use href="#hx" x="931.88" y="706.28"/><use href="#hx" x="956.89" y="706.28"/><use href="#hx" x="981.90" y="706.28"/><use href="#hx" x="1006.91" y="706.28"/><use href="#hx" x="194.08" y="727.93"/><use href="#hx" x="219.09" y="727.93"/><use href="#hx" x="244.10" y="727.93"/><use href="#hx" x="269.12" y="727.93"/><use href="#hx" x="294.12" y="727.93"/><use href="#hx" x="319.13" y="727.93"/><use href="#hx" x="344.14" y="727.93"/><use href="#hx" x="369.15" y="727.93"/><use href="#hx" x="394.16" y="727.93"/><use href="#hx" x="419.17" y="727.93"/><use href="#hx" x="444.19" y="727.93"/><use href="#hx" x="469.19" y="727.93"/><use href="#hx" x="494.20" y="727.93"/><use href="#hx" x="519.21" y="727.93"/><use href="#hx" x="544.23" y="727.93"/><use href="#hx" x="569.24" y="727.93"/><use href="#hx" x="594.25" y="727.93"/><use href="#hx" x="619.25" y="727.93"/><use href="#hx" x="644.26" y="727.93"/><use href="#hx" x="669.28" y="727.93"/><use href="#hx" x="694.29" y="727.93"/><use href="#hx" x="719.30" y="727.93"/><use href="#hx" x="744.31" y="727.93"/><use href="#hx" x="769.32" y="727.93"/><use href="#hx" x="794.33" y="727.93"/><use href="#hx" x="819.34" y="727.93"/><use href="#hx" x="844.35" y="727.93"/><use href="#hx" x="869.36" y="727.93"/><use href="#hx" x="894.37" y="727.93"/><use href="#hx" x="919.38" y="727.93"/><use href="#hx" x="944.38" y="727.93"/><use href="#hx" x="969.39" y="727.93"/><use href="#hx" x="994.40" y="727.93"/><use href="#hx" x="1019.41" y="727.93"/><use href="#hx" x="181.58" y="749.59"/><use href="#hx" x="206.59" y="749.59"/><use href="#hx" x="231.60" y="749.59"/><use href="#hx" x="256.61" y="749.59"/><use href="#hx" x="281.62" y="749.59"/><use href="#hx" x="306.63" y="749.59"/><use href="#hx" x="331.64" y="749.59"/><use href="#hx" x="356.65" y="749.59"/><use href="#hx" x="381.66" y="749.59"/><use href="#hx" x="406.67" y="749.59"/><use href="#hx" x="431.68" y="749.59"/><use href="#hx" x="456.69" y="749.59"/><use href="#hx" x="481.70" y="749.59"/><use href="#hx" x="506.71" y="749.59"/><use href="#hx" x="531.72" y="749.59"/><use href="#hx" x="556.73" y="749.59"/><use href="#hx" x="581.74" y="749.59"/><use href="#hx" x="606.75" y="749.59"/><use href="#hx" x="631.76" y="749.59"/><use href="#hx" x="656.77" y="749.59"/><use href="#hx" x="681.78" y="749.59"/><use href="#hx" x="706.79" y="749.59"/><use href="#hx" x="731.80" y="749.59"/><use href="#hx" x="756.81" y="749.59"/><use href="#hx" x="781.82" y="749.59"/><use href="#hx" x="806.83" y="749.59"/><use href="#hx" x="831.84" y="749.59"/><use href="#hx" x="856.85" y="749.59"/><use href="#hx" x="881.86" y="749.59"/><use href="#hx" x="906.87" y="749.59"/><use href="#hx" x="931.88" y="749.59"/><use href="#hx" x="956.89" y="749.59"/><use href="#hx" x="981.90" y="749.59"/><use href="#hx" x="1006.91" y="749.59"/><use href="#hx" x="1031.92" y="749.59"/><use href="#hx" x="169.07" y="771.25"/><use href="#hx" x="194.08" y="771.25"/><use href="#hx" x="219.09" y="771.25"/><use href="#hx" x="244.10" y="771.25"/><use href="#hx" x="269.12" y="771.25"/><use href="#hx" x="294.12" y="771.25"/><use href="#hx" x="319.13" y="771.25"/><use href="#hx" x="344.14" y="771.25"/><use href="#hx" x="369.15" y="771.25"/><use href="#hx" x="394.16" y="771.25"/><use href="#hx" x="419.18" y="771.25"/><use href="#hx" x="444.19" y="771.25"/><use href="#hx" x="469.19" y="771.25"/><use href="#hx" x="494.20" y="771.25"/><use href="#hx" x="519.22" y="771.25"/><use href="#hx" x="544.23" y="771.25"/><use href="#hx" x="569.24" y="771.25"/><use href="#hx" x="594.25" y="771.25"/><use href="#hx" x="619.25" y="771.25"/><use href="#hx" x="644.27" y="771.25"/><use href="#hx" x="669.28" y="771.25"/><use href="#hx" x="694.29" y="771.25"/><use href="#hx" x="719.30" y="771.25"/><use href="#hx" x="744.31" y="771.25"/><use href="#hx" x="769.32" y="771.25"/><use href="#hx" x="794.33" y="771.25"/><use href="#hx" x="819.34" y="771.25"/><use href="#hx" x="844.35" y="771.25"/><use href="#hx" x="869.36" y="771.25"/><use href="#hx" x="894.37" y="771.25"/><use href="#hx" x="919.38" y="771.25"/><use href="#hx" x="944.38" y="771.25"/><use href="#hx" x="969.39" y="771.25"/><use href="#hx" x="994.40" y="771.25"/><use href="#hx" x="1019.41" y="771.25"/><use href="#hx" x="1044.42" y="771.25"/><use href="#hx" x="156.57" y="792.91"/><use href="#hx" x="181.58" y="792.91"/><use href="#hx" x="206.59" y="792.91"/><use href="#hx" x="231.60" y="792.91"/><use href="#hx" x="256.61" y="792.91"/><use href="#hx" x="281.62" y="792.91"/><use href="#hx" x="306.63" y="792.91"/><use href="#hx" x="331.64" y="792.91"/><use href="#hx" x="356.65" y="792.91"/><use href="#hx" x="381.66" y="792.91"/><use href="#hx" x="406.67" y="792.91"/><use href="#hx" x="431.68" y="792.91"/><use href="#hx" x="456.69" y="792.91"/><use href="#hx" x="481.70" y="792.91"/><use href="#hx" x="506.71" y="792.91"/><use href="#hx" x="531.72" y="792.91"/><use href="#hx" x="556.73" y="792.91"/><use href="#hx" x="581.74" y="792.91"/><use href="#hx" x="606.75" y="792.91"/><use href="#hx" x="631.76" y="792.91"/><use href="#hx" x="656.77" y="792.91"/><use href="#hx" x="681.78" y="792.91"/><use href="#hx" x="706.79" y="792.91"/><use href="#hx" x="731.80" y="792.91"/><use href="#hx" x="756.81" y="792.91"/><use href="#hx" x="781.82" y="792.91"/><use href="#hx" x="806.83" y="792.91"/><use href="#hx" x="831.84" y="792.91"/><use href="#hx" x="856.85" y="792.91"/><use href="#hx" x="881.86" y="792.91"/><use href="#hx" x="906.87" y="792.91"/><use href="#hx" x="931.88" y="792.91"/><use href="#hx" x="956.89" y="792.91"/><use href="#hx" x="981.90" y="792.91"/><use href="#hx" x="1006.91" y="792.91"/><use href="#hx" x="1031.92" y="792.91"/><use href="#hx" x="1056.93" y="792.91"/><use href="#hx" x="144.06" y="814.57"/><use href="#hx" x="169.07" y="814.57"/><use href="#hx" x="194.09" y="814.57"/><use href="#hx" x="219.09" y="814.57"/><use href="#hx" x="244.11" y="814.57"/><use href="#hx" x="269.12" y="814.57"/><use href="#hx" x="294.12" y="814.57"/><use href="#hx" x="319.13" y="814.57"/><use href="#hx" x="344.14" y="814.57"/><use href="#hx" x="369.15" y="814.57"/><use href="#hx" x="394.17" y="814.57"/><use href="#hx" x="419.18" y="814.57"/><use href="#hx" x="444.19" y="814.57"/><use href="#hx" x="469.19" y="814.57"/><use href="#hx" x="494.21" y="814.57"/><use href="#hx" x="519.22" y="814.57"/><use href="#hx" x="544.23" y="814.57"/><use href="#hx" x="569.24" y="814.57"/><use href="#hx" x="594.25" y="814.57"/><use href="#hx" x="619.26" y="814.57"/><use href="#hx" x="644.27" y="814.57"/><use href="#hx" x="669.28" y="814.57"/><use href="#hx" x="694.29" y="814.57"/><use href="#hx" x="719.30" y="814.57"/><use href="#hx" x="744.31" y="814.57"/><use href="#hx" x="769.32" y="814.57"/><use href="#hx" x="794.33" y="814.57"/><use href="#hx" x="819.34" y="814.57"/><use href="#hx" x="844.35" y="814.57"/><use href="#hx" x="869.36" y="814.57"/><use href="#hx" x="894.37" y="814.57"/><use href="#hx" x="919.38" y="814.57"/><use href="#hx" x="944.38" y="814.57"/><use href="#hx" x="969.39" y="814.57"/><use href="#hx" x="994.40" y="814.57"/><use href="#hx" x="1019.41" y="814.57"/><use href="#hx" x="1044.42" y="814.57"/><use href="#hx" x="1069.43" y="814.57"/><use href="#hx" x="131.56" y="836.23"/><use href="#hx" x="156.57" y="836.23"/><use href="#hx" x="181.58" y="836.23"/><use href="#hx" x="206.59" y="836.23"/><use href="#hx" x="231.60" y="836.23"/><use href="#hx" x="256.61" y="836.23"/><use href="#hx" x="281.62" y="836.23"/><use href="#hx" x="306.63" y="836.23"/><use href="#hx" x="331.64" y="836.23"/><use href="#hx" x="356.65" y="836.23"/><use href="#hx" x="381.66" y="836.23"/><use href="#hx" x="406.67" y="836.23"/><use href="#hx" x="431.68" y="836.23"/><use href="#hx" x="456.69" y="836.23"/><use href="#hx" x="481.70" y="836.23"/><use href="#hx" x="506.71" y="836.23"/><use href="#hx" x="531.72" y="836.23"/><use href="#hx" x="556.73" y="836.23"/><use href="#hx" x="581.74" y="836.23"/><use href="#hx" x="606.75" y="836.23"/><use href="#hx" x="631.76" y="836.23"/><use href="#hx" x="656.77" y="836.23"/><use href="#hx" x="681.78" y="836.23"/><use href="#hx" x="706.79" y="836.23"/><use href="#hx" x="731.80" y="836.23"/><use href="#hx" x="756.81" y="836.23"/><use href="#hx" x="781.82" y="836.23"/><use href="#hx" x="806.83" y="836.23"/><use href="#hx" x="831.84" y="836.23"/><use href="#hx" x="856.85" y="836.23"/><use href="#hx" x="881.86" y="836.23"/><use href="#hx" x="906.87" y="836.23"/><use href="#hx" x="931.88" y="836.23"/><use href="#hx" x="956.89" y="836.23"/><use href="#hx" x="981.90" y="836.23"/><use href="#hx" x="1006.91" y="836.23"/><use href="#hx" x="1031.92" y="836.23"/><use href="#hx" x="1056.93" y="836.23"/><use href="#hx" x="1081.94" y="836.23"/><use href="#hx" x="119.05" y="857.89"/><use href="#hx" x="144.06" y="857.89"/><use href="#hx" x="169.07" y="857.89"/><use href="#hx" x="194.08" y="857.89"/><use href="#hx" x="219.09" y="857.89"/><use href="#hx" x="244.10" y="857.89"/><use href="#hx" x="269.11" y="857.89"/><use href="#hx" x="294.12" y="857.89"/><use href="#hx" x="319.13" y="857.89"/><use href="#hx" x="344.14" y="857.89"/><use href="#hx" x="369.15" y="857.89"/><use href="#hx" x="394.16" y="857.89"/><use href="#hx" x="419.17" y="857.89"/><use href="#hx" x="444.18" y="857.89"/><use href="#hx" x="469.19" y="857.89"/><use href="#hx" x="494.20" y="857.89"/><use href="#hx" x="519.21" y="857.89"/><use href="#hx" x="544.22" y="857.89"/><use href="#hx" x="569.23" y="857.89"/><use href="#hx" x="594.25" y="857.89"/><use href="#hx" x="619.25" y="857.89"/><use href="#hx" x="644.26" y="857.89"/><use href="#hx" x="669.27" y="857.89"/><use href="#hx" x="694.28" y="857.89"/><use href="#hx" x="719.29" y="857.89"/><use href="#hx" x="744.30" y="857.89"/><use href="#hx" x="769.31" y="857.89"/><use href="#hx" x="794.33" y="857.89"/><use href="#hx" x="819.34" y="857.89"/><use href="#hx" x="844.35" y="857.89"/><use href="#hx" x="869.36" y="857.89"/><use href="#hx" x="894.37" y="857.89"/><use href="#hx" x="919.38" y="857.89"/><use href="#hx" x="944.38" y="857.89"/><use href="#hx" x="969.39" y="857.89"/><use href="#hx" x="994.40" y="857.89"/><use href="#hx" x="1019.41" y="857.89"/><use href="#hx" x="1044.42" y="857.89"/><use href="#hx" x="1069.43" y="857.89"/><use href="#hx" x="1094.45" y="857.89"/><use href="#hx" x="106.55" y="879.55"/><use href="#hx" x="131.56" y="879.55"/><use href="#hx" x="156.57" y="879.55"/><use href="#hx" x="181.58" y="879.55"/><use href="#hx" x="206.59" y="879.55"/><use href="#hx" x="231.60" y="879.55"/><use href="#hx" x="256.61" y="879.55"/><use href="#hx" x="281.62" y="879.55"/><use href="#hx" x="306.63" y="879.55"/><use href="#hx" x="331.64" y="879.55"/><use href="#hx" x="356.65" y="879.55"/><use href="#hx" x="381.66" y="879.55"/><use href="#hx" x="406.67" y="879.55"/><use href="#hx" x="431.68" y="879.55"/><use href="#hx" x="456.69" y="879.55"/><use href="#hx" x="481.70" y="879.55"/><use href="#hx" x="506.71" y="879.55"/><use href="#hx" x="531.72" y="879.55"/><use href="#hx" x="556.73" y="879.55"/><use href="#hx" x="581.74" y="879.55"/><use href="#hx" x="606.75" y="879.55"/><use href="#hx" x="631.76" y="879.55"/><use href="#hx" x="656.77" y="879.55"/><use href="#hx" x="681.78" y="879.55"/><use href="#hx" x="706.79" y="879.55"/><use href="#hx" x="731.80" y="879.55"/><use href="#hx" x="756.81" y="879.55"/><use href="#hx" x="781.82" y="879.55"/><use href="#hx" x="806.83" y="879.55"/><use href="#hx" x="831.84" y="879.55"/><use href="#hx" x="856.85" y="879.55"/><use href="#hx" x="881.86" y="879.55"/><use href="#hx" x="906.87" y="879.55"/><use href="#hx" x="931.88" y="879.55"/><use href="#hx" x="956.89" y="879.55"/><use href="#hx" x="981.90" y="879.55"/><use href="#hx" x="1006.91" y="879.55"/><use href="#hx" x="1031.92" y="879.55"/><use href="#hx" x="1056.93" y="879.55"/><use href="#hx" x="1081.94" y="879.55"/><use href="#hx" x="1106.95" y="879.55"/><use href="#hx" x="119.05" y="901.21"/><use href="#hx" x="144.06" y="901.21"/><use href="#hx" x="169.07" y="901.21"/><use href="#hx" x="194.08" y="901.21"/><use href="#hx" x="219.09" y="901.21"/><use href="#hx" x="244.10" y="901.21"/><use href="#hx" x="269.11" y="901.21"/><use href="#hx" x="294.12" y="901.21"/><use href="#hx" x="319.13" y="901.21"/><use href="#hx" x="344.14" y="901.21"/><use href="#hx" x="369.15" y="901.21"/><use href="#hx" x="394.16" y="901.21"/><use href="#hx" x="419.17" y="901.21"/><use href="#hx" x="444.18" y="901.21"/><use href="#hx" x="469.19" y="901.21"/><use href="#hx" x="494.20" y="901.21"/><use href="#hx" x="519.21" y="901.21"/><use href="#hx" x="544.22" y="901.21"/><use href="#hx" x="569.23" y="901.21"/><use href="#hx" x="594.25" y="901.21"/><use href="#hx" x="619.25" y="901.21"/><use href="#hx" x="644.26" y="901.21"/><use href="#hx" x="669.27" y="901.21"/><use href="#hx" x="694.28" y="901.21"/><use href="#hx" x="719.29" y="901.21"/><use href="#hx" x="744.30" y="901.21"/><use href="#hx" x="769.31" y="901.21"/><use href="#hx" x="794.33" y="901.21"/><use href="#hx" x="819.34" y="901.21"/><use href="#hx" x="844.35" y="901.21"/><use href="#hx" x="869.36" y="901.21"/><use href="#hx" x="894.37" y="901.21"/><use href="#hx" x="919.38" y="901.21"/><use href="#hx" x="944.38" y="901.21"/><use href="#hx" x="969.39" y="901.21"/><use href="#hx" x="994.40" y="901.21"/><use href="#hx" x="1019.41" y="901.21"/><use href="#hx" x="1044.42" y="901.21"/><use href="#hx" x="1069.43" y="901.21"/><use href="#hx" x="1094.45" y="901.21"/><use href="#hx" x="131.56" y="922.87"/><use href="#hx" x="156.57" y="922.87"/><use href="#hx" x="181.58" y="922.87"/><use href="#hx" x="206.59" y="922.87"/><use href="#hx" x="231.60" y="922.87"/><use href="#hx" x="256.61" y="922.87"/><use href="#hx" x="281.62" y="922.87"/><use href="#hx" x="306.63" y="922.87"/><use href="#hx" x="331.64" y="922.87"/><use href="#hx" x="356.65" y="922.87"/><use href="#hx" x="381.66" y="922.87"/><use href="#hx" x="406.67" y="922.87"/><use href="#hx" x="431.68" y="922.87"/><use href="#hx" x="456.69" y="922.87"/><use href="#hx" x="481.70" y="922.87"/><use href="#hx" x="506.71" y="922.87"/><use href="#hx" x="531.72" y="922.87"/><use href="#hx" x="556.73" y="922.87"/><use href="#hx" x="581.74" y="922.87"/><use href="#hx" x="606.75" y="922.87"/><use href="#hx" x="631.76" y="922.87"/><use href="#hx" x="656.77" y="922.87"/><use href="#hx" x="681.78" y="922.87"/><use href="#hx" x="706.79" y="922.87"/><use href="#hx" x="731.80" y="922.87"/><use href="#hx" x="756.81" y="922.87"/><use href="#hx" x="781.82" y="922.87"/><use href="#hx" x="806.83" y="922.87"/><use href="#hx" x="831.84" y="922.87"/><use href="#hx" x="856.85" y="922.87"/><use href="#hx" x="881.86" y="922.87"/><use href="#hx" x="906.87" y="922.87"/><use href="#hx" x="931.88" y="922.87"/><use href="#hx" x="956.89" y="922.87"/><use href="#hx" x="981.90" y="922.87"/><use href="#hx" x="1006.91" y="922.87"/><use href="#hx" x="1031.92" y="922.87"/><use href="#hx" x="1056.93" y="922.87"/><use href="#hx" x="1081.94" y="922.87"/><use href="#hx" x="144.06" y="944.53"/><use href="#hx" x="169.07" y="944.53"/><use href="#hx" x="194.09" y="944.53"/><use href="#hx" x="219.09" y="944.53"/><use href="#hx" x="244.11" y="944.53"/><use href="#hx" x="269.12" y="944.53"/><use href="#hx" x="294.12" y="944.53"/><use href="#hx" x="319.13" y="944.53"/><use href="#hx" x="344.14" y="944.53"/><use href="#hx" x="369.15" y="944.53"/><use href="#hx" x="394.17" y="944.53"/><use href="#hx" x="419.18" y="944.53"/><use href="#hx" x="444.19" y="944.53"/><use href="#hx" x="469.19" y="944.53"/><use href="#hx" x="494.21" y="944.53"/><use href="#hx" x="519.22" y="944.53"/><use href="#hx" x="544.23" y="944.53"/><use href="#hx" x="569.24" y="944.53"/><use href="#hx" x="594.25" y="944.53"/><use href="#hx" x="619.26" y="944.53"/><use href="#hx" x="644.27" y="944.53"/><use href="#hx" x="669.28" y="944.53"/><use href="#hx" x="694.29" y="944.53"/><use href="#hx" x="719.30" y="944.53"/><use href="#hx" x="744.31" y="944.53"/><use href="#hx" x="769.32" y="944.53"/><use href="#hx" x="794.33" y="944.53"/><use href="#hx" x="819.34" y="944.53"/><use href="#hx" x="844.35" y="944.53"/><use href="#hx" x="869.36" y="944.53"/><use href="#hx" x="894.37" y="944.53"/><use href="#hx" x="919.38" y="944.53"/><use href="#hx" x="944.38" y="944.53"/><use href="#hx" x="969.39" y="944.53"/><use href="#hx" x="994.40" y="944.53"/><use href="#hx" x="1019.41" y="944.53"/><use href="#hx" x="1044.42" y="944.53"/><use href="#hx" x="1069.43" y="944.53"/><use href="#hx" x="156.57" y="966.19"/><use href="#hx" x="181.58" y="966.19"/><use href="#hx" x="206.59" y="966.19"/><use href="#hx" x="231.60" y="966.19"/><use href="#hx" x="256.61" y="966.19"/><use href="#hx" x="281.62" y="966.19"/><use href="#hx" x="306.63" y="966.19"/><use href="#hx" x="331.64" y="966.19"/><use href="#hx" x="356.65" y="966.19"/><use href="#hx" x="381.66" y="966.19"/><use href="#hx" x="406.67" y="966.19"/><use href="#hx" x="431.68" y="966.19"/><use href="#hx" x="456.69" y="966.19"/><use href="#hx" x="481.70" y="966.19"/><use href="#hx" x="506.71" y="966.19"/><use href="#hx" x="531.72" y="966.19"/><use href="#hx" x="556.73" y="966.19"/><use href="#hx" x="581.74" y="966.19"/><use href="#hx" x="606.75" y="966.19"/><use href="#hx" x="631.76" y="966.19"/><use href="#hx" x="656.77" y="966.19"/><use href="#hx" x="681.78" y="966.19"/><use href="#hx" x="706.79" y="966.19"/><use href="#hx" x="731.80" y="966.19"/><use href="#hx" x="756.81" y="966.19"/><use href="#hx" x="781.82" y="966.19"/><use href="#hx" x="806.83" y="966.19"/><use href="#hx" x="831.84" y="966.19"/><use href="#hx" x="856.85" y="966.19"/><use href="#hx" x="881.86" y="966.19"/><use href="#hx" x="906.87" y="966.19"/><use href="#hx" x="931.88" y="966.19"/><use href="#hx" x="956.89" y="966.19"/><use href="#hx" x="981.90" y="966.19"/><use href="#hx" x="1006.91" y="966.19"/><use href="#hx" x="1031.92" y="966.19"/><use href="#hx" x="1056.93" y="966.19"/><use href="#hx" x="169.07" y="987.85"/><use href="#hx" x="194.08" y="987.85"/><use href="#hx" x="219.09" y="987.85"/><use href="#hx" x="244.10" y="987.85"/><use href="#hx" x="269.12" y="987.85"/><use href="#hx" x="294.12" y="987.85"/><use href="#hx" x="319.13" y="987.85"/><use href="#hx" x="344.14" y="987.85"/><use href="#hx" x="369.15" y="987.85"/><use href="#hx" x="394.16" y="987.85"/><use href="#hx" x="419.18" y="987.85"/><use href="#hx" x="444.19" y="987.85"/><use href="#hx" x="469.19" y="987.85"/><use href="#hx" x="494.20" y="987.85"/><use href="#hx" x="519.22" y="987.85"/><use href="#hx" x="544.23" y="987.85"/><use href="#hx" x="569.24" y="987.85"/><use href="#hx" x="594.25" y="987.85"/><use href="#hx" x="619.25" y="987.85"/><use href="#hx" x="644.27" y="987.85"/><use href="#hx" x="669.28" y="987.85"/><use href="#hx" x="694.29" y="987.85"/><use href="#hx" x="719.30" y="987.85"/><use href="#hx" x="744.31" y="987.85"/><use href="#hx" x="769.32" y="987.85"/><use href="#hx" x="794.33" y="987.85"/><use href="#hx" x="819.34" y="987.85"/><use href="#hx" x="844.35" y="987.85"/><use href="#hx" x="869.36" y="987.85"/><use href="#hx" x="894.37" y="987.85"/><use href="#hx" x="919.38" y="987.85"/><use href="#hx" x="944.38" y="987.85"/><use href="#hx" x="969.39" y="987.85"/><use href="#hx" x="994.40" y="987.85"/><use href="#hx" x="1019.41" y="987.85"/><use href="#hx" x="1044.42" y="987.85"/><use href="#hx" x="181.58" y="1009.51"/><use href="#hx" x="206.59" y="1009.51"/><use href="#hx" x="231.60" y="1009.51"/><use href="#hx" x="256.61" y="1009.51"/><use href="#hx" x="281.62" y="1009.51"/><use href="#hx" x="306.63" y="1009.51"/><use href="#hx" x="331.64" y="1009.51"/><use href="#hx" x="356.65" y="1009.51"/><use href="#hx" x="381.66" y="1009.51"/><use href="#hx" x="406.67" y="1009.51"/><use href="#hx" x="431.68" y="1009.51"/><use href="#hx" x="456.69" y="1009.51"/><use href="#hx" x="481.70" y="1009.51"/><use href="#hx" x="506.71" y="1009.51"/><use href="#hx" x="531.72" y="1009.51"/><use href="#hx" x="556.73" y="1009.51"/><use href="#hx" x="581.74" y="1009.51"/><use href="#hx" x="606.75" y="1009.51"/><use href="#hx" x="631.76" y="1009.51"/><use href="#hx" x="656.77" y="1009.51"/><use href="#hx" x="681.78" y="1009.51"/><use href="#hx" x="706.79" y="1009.51"/><use href="#hx" x="731.80" y="1009.51"/><use href="#hx" x="756.81" y="1009.51"/><use href="#hx" x="781.82" y="1009.51"/><use href="#hx" x="806.83" y="1009.51"/><use href="#hx" x="831.84" y="1009.51"/><use href="#hx" x="856.85" y="1009.51"/><use href="#hx" x="881.86" y="1009.51"/><use href="#hx" x="906.87" y="1009.51"/><use href="#hx" x="931.88" y="1009.51"/><use href="#hx" x="956.89" y="1009.51"/><use href="#hx" x="981.90" y="1009.51"/><use href="#hx" x="1006.91" y="1009.51"/><use href="#hx" x="1031.92" y="1009.51"/><use href="#hx" x="194.08" y="1031.17"/><use href="#hx" x="219.09" y="1031.17"/><use href="#hx" x="244.10" y="1031.17"/><use href="#hx" x="269.12" y="1031.17"/><use href="#hx" x="294.12" y="1031.17"/><use href="#hx" x="319.13" y="1031.17"/><use href="#hx" x="344.14" y="1031.17"/><use href="#hx" x="369.15" y="1031.17"/><use href="#hx" x="394.16" y="1031.17"/><use href="#hx" x="419.17" y="1031.17"/><use href="#hx" x="444.19" y="1031.17"/><use href="#hx" x="469.19" y="1031.17"/><use href="#hx" x="494.20" y="1031.17"/><use href="#hx" x="519.21" y="1031.17"/><use href="#hx" x="544.23" y="1031.17"/><use href="#hx" x="569.24" y="1031.17"/><use href="#hx" x="594.25" y="1031.17"/><use href="#hx" x="619.25" y="1031.17"/><use href="#hx" x="644.26" y="1031.17"/><use href="#hx" x="669.28" y="1031.17"/><use href="#hx" x="694.29" y="1031.17"/><use href="#hx" x="719.30" y="1031.17"/><use href="#hx" x="744.31" y="1031.17"/><use href="#hx" x="769.32" y="1031.17"/><use href="#hx" x="794.33" y="1031.17"/><use href="#hx" x="819.34" y="1031.17"/><use href="#hx" x="844.35" y="1031.17"/><use href="#hx" x="869.36" y="1031.17"/><use href="#hx" x="894.37" y="1031.17"/><use href="#hx" x="919.38" y="1031.17"/><use href="#hx" x="944.38" y="1031.17"/><use href="#hx" x="969.39" y="1031.17"/><use href="#hx" x="994.40" y="1031.17"/><use href="#hx" x="1019.41" y="1031.17"/><use href="#hx" x="206.59" y="1052.82"/><use href="#hx" x="231.60" y="1052.82"/><use href="#hx" x="256.61" y="1052.82"/><use href="#hx" x="281.62" y="1052.82"/><use href="#hx" x="306.63" y="1052.82"/><use href="#hx" x="331.64" y="1052.82"/><use href="#hx" x="356.65" y="1052.82"/><use href="#hx" x="381.66" y="1052.82"/><use href="#hx" x="406.67" y="1052.82"/><use href="#hx" x="431.68" y="1052.82"/><use href="#hx" x="456.69" y="1052.82"/><use href="#hx" x="481.70" y="1052.82"/><use href="#hx" x="506.71" y="1052.82"/><use href="#hx" x="531.72" y="1052.82"/><use href="#hx" x="556.73" y="1052.82"/><use href="#hx" x="581.74" y="1052.82"/><use href="#hx" x="606.75" y="1052.82"/><use href="#hx" x="631.76" y="1052.82"/><use href="#hx" x="656.77" y="1052.82"/><use href="#hx" x="681.78" y="1052.82"/><use href="#hx" x="706.79" y="1052.82"/><use href="#hx" x="731.80" y="1052.82"/><use href="#hx" x="756.81" y="1052.82"/><use href="#hx" x="781.82" y="1052.82"/><use href="#hx" x="806.83" y="1052.82"/><use href="#hx" x="831.84" y="1052.82"/><use href="#hx" x="856.85" y="1052.82"/><use href="#hx" x="881.86" y="1052.82"/><use href="#hx" x="906.87" y="1052.82"/><use href="#hx" x="931.88" y="1052.82"/><use href="#hx" x="956.89" y="1052.82"/><use href="#hx" x="981.90" y="1052.82"/><use href="#hx" x="1006.91" y="1052.82"/><use href="#hx" x="219.09" y="1074.48"/><use href="#hx" x="244.10" y="1074.48"/><use href="#hx" x="269.11" y="1074.48"/><use href="#hx" x="294.12" y="1074.48"/><use href="#hx" x="319.13" y="1074.48"/><use href="#hx" x="344.14" y="1074.48"/><use href="#hx" x="369.15" y="1074.48"/><use href="#hx" x="394.16" y="1074.48"/><use href="#hx" x="419.17" y="1074.48"/><use href="#hx" x="444.18" y="1074.48"/><use href="#hx" x="469.19" y="1074.48"/><use href="#hx" x="494.20" y="1074.48"/><use href="#hx" x="519.21" y="1074.48"/><use href="#hx" x="544.22" y="1074.48"/><use href="#hx" x="569.24" y="1074.48"/><use href="#hx" x="594.25" y="1074.48"/><use href="#hx" x="619.25" y="1074.48"/><use href="#hx" x="644.26" y="1074.48"/><use href="#hx" x="669.27" y="1074.48"/><use href="#hx" x="694.29" y="1074.48"/><use href="#hx" x="719.30" y="1074.48"/><use href="#hx" x="744.31" y="1074.48"/><use href="#hx" x="769.32" y="1074.48"/><use href="#hx" x="794.33" y="1074.48"/><use href="#hx" x="819.34" y="1074.48"/><use href="#hx" x="844.35" y="1074.48"/><use href="#hx" x="869.36" y="1074.48"/><use href="#hx" x="894.37" y="1074.48"/><use href="#hx" x="919.38" y="1074.48"/><use href="#hx" x="944.38" y="1074.48"/><use href="#hx" x="969.39" y="1074.48"/><use href="#hx" x="994.40" y="1074.48"/><use href="#hx" x="231.60" y="1096.14"/><use href="#hx" x="256.61" y="1096.14"/><use href="#hx" x="281.62" y="1096.14"/><use href="#hx" x="306.63" y="1096.14"/><use href="#hx" x="331.64" y="1096.14"/><use href="#hx" x="356.65" y="1096.14"/><use href="#hx" x="381.66" y="1096.14"/><use href="#hx" x="406.67" y="1096.14"/><use href="#hx" x="431.68" y="1096.14"/><use href="#hx" x="456.69" y="1096.14"/><use href="#hx" x="481.70" y="1096.14"/><use href="#hx" x="506.71" y="1096.14"/><use href="#hx" x="531.72" y="1096.14"/><use href="#hx" x="556.73" y="1096.14"/><use href="#hx" x="581.74" y="1096.14"/><use href="#hx" x="606.75" y="1096.14"/><use href="#hx" x="631.76" y="1096.14"/><use href="#hx" x="656.77" y="1096.14"/><use href="#hx" x="681.78" y="1096.14"/><use href="#hx" x="706.79" y="1096.14"/><use href="#hx" x="731.80" y="1096.14"/><use href="#hx" x="756.81" y="1096.14"/><use href="#hx" x="781.82" y="1096.14"/><use href="#hx" x="806.83" y="1096.14"/><use href="#hx" x="831.84" y="1096.14"/><use href="#hx" x="856.85" y="1096.14"/><use href="#hx" x="881.86" y="1096.14"/><use href="#hx" x="906.87" y="1096.14"/><use href="#hx" x="931.88" y="1096.14"/><use href="#hx" x="956.89" y="1096.14"/><use href="#hx" x="981.90" y="1096.14"/><use href="#hx" x="244.10" y="1117.80"/><use href="#hx" x="269.11" y="1117.80"/><use href="#hx" x="294.12" y="1117.80"/><use href="#hx" x="319.13" y="1117.80"/><use href="#hx" x="344.14" y="1117.80"/><use href="#hx" x="369.15" y="1117.80"/><use href="#hx" x="394.16" y="1117.80"/><use href="#hx" x="419.17" y="1117.80"/><use href="#hx" x="444.18" y="1117.80"/><use href="#hx" x="469.19" y="1117.80"/><use href="#hx" x="494.20" y="1117.80"/><use href="#hx" x="519.21" y="1117.80"/><use href="#hx" x="544.22" y="1117.80"/><use href="#hx" x="569.23" y="1117.80"/><use href="#hx" x="594.25" y="1117.80"/><use href="#hx" x="619.25" y="1117.80"/><use href="#hx" x="644.26" y="1117.80"/><use href="#hx" x="669.27" y="1117.80"/><use href="#hx" x="694.28" y="1117.80"/><use href="#hx" x="719.30" y="1117.80"/><use href="#hx" x="744.31" y="1117.80"/><use href="#hx" x="769.32" y="1117.80"/><use href="#hx" x="794.33" y="1117.80"/><use href="#hx" x="819.34" y="1117.80"/><use href="#hx" x="844.35" y="1117.80"/><use href="#hx" x="869.36" y="1117.80"/><use href="#hx" x="894.37" y="1117.80"/><use href="#hx" x="919.38" y="1117.80"/><use href="#hx" x="944.38" y="1117.80"/><use href="#hx" x="969.39" y="1117.80"/><use href="#hx" x="256.61" y="1139.46"/><use href="#hx" x="281.62" y="1139.46"/><use href="#hx" x="306.63" y="1139.46"/><use href="#hx" x="331.64" y="1139.46"/><use href="#hx" x="356.65" y="1139.46"/><use href="#hx" x="381.66" y="1139.46"/><use href="#hx" x="406.67" y="1139.46"/><use href="#hx" x="431.68" y="1139.46"/><use href="#hx" x="456.69" y="1139.46"/><use href="#hx" x="481.70" y="1139.46"/><use href="#hx" x="506.71" y="1139.46"/><use href="#hx" x="531.72" y="1139.46"/><use href="#hx" x="556.73" y="1139.46"/><use href="#hx" x="581.74" y="1139.46"/><use href="#hx" x="606.75" y="1139.46"/><use href="#hx" x="631.76" y="1139.46"/><use href="#hx" x="656.77" y="1139.46"/><use href="#hx" x="681.78" y="1139.46"/><use href="#hx" x="706.79" y="1139.46"/><use href="#hx" x="731.80" y="1139.46"/><use href="#hx" x="756.81" y="1139.46"/><use href="#hx" x="781.82" y="1139.46"/><use href="#hx" x="806.83" y="1139.46"/><use href="#hx" x="831.84" y="1139.46"/><use href="#hx" x="856.85" y="1139.46"/><use href="#hx" x="881.86" y="1139.46"/><use href="#hx" x="906.87" y="1139.46"/><use href="#hx" x="931.88" y="1139.46"/><use href="#hx" x="956.89" y="1139.46"/><use href="#hx" x="269.11" y="1161.12"/><use href="#hx" x="294.12" y="1161.12"/><use href="#hx" x="319.13" y="1161.12"/><use href="#hx" x="344.14" y="1161.12"/><use href="#hx" x="369.15" y="1161.12"/><use href="#hx" x="394.16" y="1161.12"/><use href="#hx" x="419.17" y="1161.12"/><use href="#hx" x="444.18" y="1161.12"/><use href="#hx" x="469.19" y="1161.12"/><use href="#hx" x="494.20" y="1161.12"/><use href="#hx" x="519.21" y="1161.12"/><use href="#hx" x="544.22" y="1161.12"/><use href="#hx" x="569.23" y="1161.12"/><use href="#hx" x="594.24" y="1161.12"/><use href="#hx" x="619.25" y="1161.12"/><use href="#hx" x="644.26" y="1161.12"/><use href="#hx" x="669.27" y="1161.12"/><use href="#hx" x="694.28" y="1161.12"/><use href="#hx" x="719.29" y="1161.12"/><use href="#hx" x="744.31" y="1161.12"/><use href="#hx" x="769.32" y="1161.12"/><use href="#hx" x="794.33" y="1161.12"/><use href="#hx" x="819.34" y="1161.12"/><use href="#hx" x="844.35" y="1161.12"/><use href="#hx" x="869.36" y="1161.12"/><use href="#hx" x="894.37" y="1161.12"/><use href="#hx" x="919.38" y="1161.12"/><use href="#hx" x="944.38" y="1161.12"/><use href="#hx" x="281.62" y="1182.78"/><use href="#hx" x="306.63" y="1182.78"/><use href="#hx" x="331.64" y="1182.78"/><use href="#hx" x="356.65" y="1182.78"/><use href="#hx" x="381.66" y="1182.78"/><use href="#hx" x="406.67" y="1182.78"/><use href="#hx" x="431.68" y="1182.78"/><use href="#hx" x="456.69" y="1182.78"/><use href="#hx" x="481.70" y="1182.78"/><use href="#hx" x="506.71" y="1182.78"/><use href="#hx" x="531.72" y="1182.78"/><use href="#hx" x="556.73" y="1182.78"/><use href="#hx" x="581.74" y="1182.78"/><use href="#hx" x="606.75" y="1182.78"/><use href="#hx" x="631.76" y="1182.78"/><use href="#hx" x="656.77" y="1182.78"/><use href="#hx" x="681.78" y="1182.78"/><use href="#hx" x="706.79" y="1182.78"/><use href="#hx" x="731.80" y="1182.78"/><use href="#hx" x="756.81" y="1182.78"/><use href="#hx" x="781.82" y="1182.78"/><use href="#hx" x="806.83" y="1182.78"/><use href="#hx" x="831.84" y="1182.78"/><use href="#hx" x="856.85" y="1182.78"/><use href="#hx" x="881.86" y="1182.78"/><use href="#hx" x="906.87" y="1182.78"/><use href="#hx" x="931.88" y="1182.78"/><use href="#hx" x="294.12" y="1204.44"/><use href="#hx" x="319.13" y="1204.44"/><use href="#hx" x="344.14" y="1204.44"/><use href="#hx" x="369.15" y="1204.44"/><use href="#hx" x="394.17" y="1204.44"/><use href="#hx" x="419.18" y="1204.44"/><use href="#hx" x="444.19" y="1204.44"/><use href="#hx" x="469.20" y="1204.44"/><use href="#hx" x="494.21" y="1204.44"/><use href="#hx" x="519.22" y="1204.44"/><use href="#hx" x="544.23" y="1204.44"/><use href="#hx" x="569.24" y="1204.44"/><use href="#hx" x="594.25" y="1204.44"/><use href="#hx" x="619.25" y="1204.44"/><use href="#hx" x="644.27" y="1204.44"/><use href="#hx" x="669.28" y="1204.44"/><use href="#hx" x="694.29" y="1204.44"/><use href="#hx" x="719.30" y="1204.44"/><use href="#hx" x="744.31" y="1204.44"/><use href="#hx" x="769.32" y="1204.44"/><use href="#hx" x="794.33" y="1204.44"/><use href="#hx" x="819.34" y="1204.44"/><use href="#hx" x="844.35" y="1204.44"/><use href="#hx" x="869.36" y="1204.44"/><use href="#hx" x="894.37" y="1204.44"/><use href="#hx" x="919.38" y="1204.44"/><use href="#hx" x="306.63" y="1226.10"/><use href="#hx" x="331.64" y="1226.10"/><use href="#hx" x="356.65" y="1226.10"/><use href="#hx" x="381.66" y="1226.10"/><use href="#hx" x="406.67" y="1226.10"/><use href="#hx" x="431.68" y="1226.10"/><use href="#hx" x="456.69" y="1226.10"/><use href="#hx" x="481.70" y="1226.10"/><use href="#hx" x="506.71" y="1226.10"/><use href="#hx" x="531.72" y="1226.10"/><use href="#hx" x="556.73" y="1226.10"/><use href="#hx" x="581.74" y="1226.10"/><use href="#hx" x="606.75" y="1226.10"/><use href="#hx" x="631.76" y="1226.10"/><use href="#hx" x="656.77" y="1226.10"/><use href="#hx" x="681.78" y="1226.10"/><use href="#hx" x="706.79" y="1226.10"/><use href="#hx" x="731.80" y="1226.10"/><use href="#hx" x="756.81" y="1226.10"/><use href="#hx" x="781.82" y="1226.10"/><use href="#hx" x="806.83" y="1226.10"/><use href="#hx" x="831.84" y="1226.10"/><use href="#hx" x="856.85" y="1226.10"/><use href="#hx" x="881.86" y="1226.10"/><use href="#hx" x="906.87" y="1226.10"/><use href="#hx" x="319.13" y="1247.76"/><use href="#hx" x="344.14" y="1247.76"/><use href="#hx" x="369.15" y="1247.76"/><use href="#hx" x="394.16" y="1247.76"/><use href="#hx" x="419.18" y="1247.76"/><use href="#hx" x="444.19" y="1247.76"/><use href="#hx" x="469.19" y="1247.76"/><use href="#hx" x="494.21" y="1247.76"/><use href="#hx" x="519.22" y="1247.76"/><use href="#hx" x="544.23" y="1247.76"/><use href="#hx" x="569.24" y="1247.76"/><use href="#hx" x="594.25" y="1247.76"/><use href="#hx" x="619.25" y="1247.76"/><use href="#hx" x="644.26" y="1247.76"/><use href="#hx" x="669.28" y="1247.76"/><use href="#hx" x="694.29" y="1247.76"/><use href="#hx" x="719.30" y="1247.76"/><use href="#hx" x="744.31" y="1247.76"/><use href="#hx" x="769.32" y="1247.76"/><use href="#hx" x="794.33" y="1247.76"/><use href="#hx" x="819.34" y="1247.76"/><use href="#hx" x="844.35" y="1247.76"/><use href="#hx" x="869.36" y="1247.76"/><use href="#hx" x="894.37" y="1247.76"/><use href="#hx" x="331.64" y="1269.42"/><use href="#hx" x="356.65" y="1269.42"/><use href="#hx" x="381.66" y="1269.42"/><use href="#hx" x="406.67" y="1269.42"/><use href="#hx" x="431.68" y="1269.42"/><use href="#hx" x="456.69" y="1269.42"/><use href="#hx" x="481.70" y="1269.42"/><use href="#hx" x="506.71" y="1269.42"/><use href="#hx" x="531.72" y="1269.42"/><use href="#hx" x="556.73" y="1269.42"/><use href="#hx" x="581.74" y="1269.42"/><use href="#hx" x="606.75" y="1269.42"/><use href="#hx" x="631.76" y="1269.42"/><use href="#hx" x="656.77" y="1269.42"/><use href="#hx" x="681.78" y="1269.42"/><use href="#hx" x="706.79" y="1269.42"/><use href="#hx" x="731.80" y="1269.42"/><use href="#hx" x="756.81" y="1269.42"/><use href="#hx" x="781.82" y="1269.42"/><use href="#hx" x="806.83" y="1269.42"/><use href="#hx" x="831.84" y="1269.42"/><use href="#hx" x="856.85" y="1269.42"/><use href="#hx" x="881.86" y="1269.42"/><use href="#hx" x="344.14" y="1291.08"/><use href="#hx" x="369.15" y="1291.08"/><use href="#hx" x="394.16" y="1291.08"/><use href="#hx" x="419.17" y="1291.08"/><use href="#hx" x="444.19" y="1291.08"/><use href="#hx" x="469.19" y="1291.08"/><use href="#hx" x="494.20" y="1291.08"/><use href="#hx" x="519.22" y="1291.08"/><use href="#hx" x="544.23" y="1291.08"/><use href="#hx" x="569.24" y="1291.08"/><use href="#hx" x="594.25" y="1291.08"/><use href="#hx" x="619.25" y="1291.08"/><use href="#hx" x="644.26" y="1291.08"/><use href="#hx" x="669.27" y="1291.08"/><use href="#hx" x="694.29" y="1291.08"/><use href="#hx" x="719.30" y="1291.08"/><use href="#hx" x="744.31" y="1291.08"/><use href="#hx" x="769.32" y="1291.08"/><use href="#hx" x="794.33" y="1291.08"/><use href="#hx" x="819.34" y="1291.08"/><use href="#hx" x="844.35" y="1291.08"/><use href="#hx" x="869.36" y="1291.08"/><use href="#hx" x="356.65" y="1312.74"/><use href="#hx" x="381.66" y="1312.74"/><use href="#hx" x="406.67" y="1312.74"/><use href="#hx" x="431.68" y="1312.74"/><use href="#hx" x="456.69" y="1312.74"/><use href="#hx" x="481.70" y="1312.74"/><use href="#hx" x="506.71" y="1312.74"/><use href="#hx" x="531.72" y="1312.74"/><use href="#hx" x="556.73" y="1312.74"/><use href="#hx" x="581.74" y="1312.74"/><use href="#hx" x="606.75" y="1312.74"/><use href="#hx" x="631.76" y="1312.74"/><use href="#hx" x="656.77" y="1312.74"/><use href="#hx" x="681.78" y="1312.74"/><use href="#hx" x="706.79" y="1312.74"/><use href="#hx" x="731.80" y="1312.74"/><use href="#hx" x="756.81" y="1312.74"/><use href="#hx" x="781.82" y="1312.74"/><use href="#hx" x="806.83" y="1312.74"/><use href="#hx" x="831.84" y="1312.74"/><use href="#hx" x="856.85" y="1312.74"/></svg>
<svg style="position:absolute;left:0;top:0" width="1246" height="1515" viewBox="0 0 1246 1515"><rect x="106.20" y="301.60" width="1001.00" height="1155.90" fill="none" stroke="rgb(228,126,42)" stroke-opacity="0.5" stroke-width="2"/><path d="M106.200 428.500V1328.600M1107.200 428.500V1328.600" stroke="rgb(70,100,70)" stroke-opacity=".12" stroke-width="2" fill="none"/><path d="M107.200 428.60H1106.200" stroke="rgb(70,178,184)" stroke-opacity="0.25" stroke-width="1.100"/><path d="M107.200 811.60H1106.200" stroke="rgb(70,178,184)" stroke-opacity="0.45" stroke-width="1.100"/><path d="M107.200 1193.10H1106.200" stroke="rgb(70,178,184)" stroke-opacity="0.45" stroke-width="1.100"/><path d="M107.200 1328.60H1106.200" stroke="rgb(70,178,184)" stroke-opacity="0.25" stroke-width="1.100"/><path d="M3 496.90H1246" stroke="rgb(60,125,120)" stroke-opacity="0.3" stroke-width="2"/><path d="M3 879.00H1246" stroke="rgb(0,6,0)" stroke-opacity="0.24" stroke-width="2"/><path d="M3 1261.10H1246" stroke="rgb(60,125,120)" stroke-opacity="0.3" stroke-width="2"/><rect x="106.20" y="843.00" width="75.80" height="29.20" fill="none" stroke="rgb(205,105,10)" stroke-opacity="0.5" stroke-width="2"/><rect x="93.80" y="865.10" width="63.20" height="50.70" fill="none" stroke="rgb(205,105,10)" stroke-opacity="0.5" stroke-width="2"/><rect x="1057.10" y="843.20" width="63.00" height="51.00" fill="none" stroke="rgb(205,105,10)" stroke-opacity="0.5" stroke-width="2"/><rect x="1032.00" y="887.00" width="75.20" height="28.60" fill="none" stroke="rgb(205,105,10)" stroke-opacity="0.5" stroke-width="2"/><rect x="14.10" y="1392.00" width="49.10" height="49.10" fill="none" stroke="rgb(205,105,10)" stroke-opacity="0.45" stroke-width="1.5"/><rect x="1186.20" y="1392.00" width="49.00" height="49.10" fill="none" stroke="rgb(205,105,10)" stroke-opacity="0.45" stroke-width="1.5"/></svg>
<div style="position:absolute;left:2.00px;top:114.00px;width:1244.00px;height:1.00px;background:#ecb48c;"></div>
<div style="position:absolute;left:2.00px;top:115.00px;width:1244.00px;height:5.00px;background:rgba(235,130,50,.125);"></div>
<div style="position:absolute;left:3.00px;top:120.00px;width:5.00px;height:1395.00px;background:rgba(235,130,50,.125);"></div>
<div style="position:absolute;left:1241.00px;top:120.00px;width:5.00px;height:1395.00px;background:rgba(235,130,50,.125);"></div>
<div style="position:absolute;left:2.00px;top:115.00px;width:1.20px;height:1400.00px;background:rgba(235,130,50,.55);"></div>
<div style="position:absolute;left:8.00px;top:1462.00px;width:1233.00px;height:9.00px;background:rgba(235,130,50,.125);"></div>
<div style="position:absolute;left:2.00px;top:1464.00px;width:1244.00px;height:1.00px;background:#e9b685;"></div>
<div style="position:absolute;left:2.00px;top:1465.00px;width:1244.00px;height:1.00px;background:#a96d39;"></div>
<div style="position:absolute;left:14.90px;top:1393.10px;width:47.60px;height:47.00px;background:#efe27f;box-sizing:border-box;border:1px solid #6b6a14;border-radius:50% 4px 50% 50%;"></div>
<svg style="position:absolute;left:26.00px;top:1407.50px;" width="25" height="22" viewBox="0 0 25 22"><path d="M4.500 2.500h14.500a2.500 2.500 0 0 1 2.500 2.500v8a2.500 2.500 0 0 1-2.500 2.500h-2v4l-4.300-4H4.500A2.500 2.500 0 0 1 2 13V5a2.500 2.500 0 0 1 2.500-2.500z" fill="none" stroke="#2a2f38" stroke-width="1.600" stroke-linejoin="round"/></svg>
<div style="position:absolute;left:1187.30px;top:1393.10px;width:47.60px;height:47.00px;background:#efe27f;box-sizing:border-box;border:1px solid #6b6a14;border-radius:4px 50% 50% 50%;"></div>
<svg style="position:absolute;left:1202.00px;top:1408.00px;" width="18" height="18" viewBox="0 0 18 18"><circle cx="9" cy="9" r="7.600" fill="none" stroke="#2a2f38" stroke-width="1.400"/><path d="M9 8v5" stroke="#2a2f38" stroke-width="1.500"/><circle cx="9" cy="5.400" r="1" fill="#2a2f38"/></svg>
<div style="position:absolute;left:8.20px;top:1477.00px;width:36.00px;height:36.00px;background:#fff;border-radius:50%;box-sizing:border-box;border:3.600px solid #a39a28;"></div>
<div class="t" style="left:18.30px;top:1483.93px;font-size:23.00px;color:#222;font-weight:700;letter-spacing:0.000px;"><span id="t10">P</span></div>
<div class="t" style="left:51.40px;top:1484.01px;font-size:23.50px;color:#4b5563;font-weight:400;letter-spacing:0.952px;"><span id="t11">Start chatting...</span></div>
<div style="position:absolute;left:2.200px;top:114.200px;width:293.600px;height:276.300px;background:rgba(0,0,0,.85);border-right:1px solid rgba(0,0,0,.4);box-sizing:border-box"></div>
<div class="t" style="left:8.00px;top:124.09px;font-size:19.50px;color:#fff;font-weight:400;letter-spacing:0.005px;"><span id="t12">Frame Rate</span></div>
<div class="t" style="left:225.30px;top:155.46px;font-size:18.00px;color:#6fe84e;font-weight:400;letter-spacing:-0.107px;"><span id="t13">26.4 fps</span></div>
<div style="position:absolute;left:8.00px;top:179.30px;width:269.70px;height:1.00px;background:#2f5d25;"></div>
<svg style="position:absolute;left:0;top:181.200px" width="290" height="61" viewBox="0 0 290 61"><rect x="7.10" y="0" width="7.74" height="60.700" fill="#c26230"/><rect x="14.80" y="0" width="1.44" height="60.700" fill="#93b3d4"/><rect x="16.20" y="0" width="2.74" height="60.700" fill="#c26230"/><rect x="18.90" y="0" width="2.14" height="60.700" fill="#d9cf42"/><rect x="21.00" y="0" width="7.14" height="60.700" fill="#c26230"/><rect x="28.10" y="0" width="1.84" height="60.700" fill="#8c8c8c"/><rect x="29.90" y="0" width="8.94" height="60.700" fill="#c26230"/><rect x="38.80" y="0" width="1.34" height="60.700" fill="#93b3d4"/><rect x="40.10" y="0" width="1.94" height="60.700" fill="#d9cf42"/><rect x="42.00" y="0" width="6.04" height="60.700" fill="#c26230"/><rect x="48.00" y="0" width="1.24" height="60.700" fill="#93b3d4"/><rect x="49.20" y="0" width="1.84" height="60.700" fill="#d9cf42"/><rect x="51.00" y="0" width="1.04" height="60.700" fill="#93b3d4"/><rect x="52.00" y="0" width="3.14" height="60.700" fill="#fdf552"/><rect x="55.10" y="0" width="1.74" height="60.700" fill="#8c8c8c"/><rect x="56.80" y="0" width="1.24" height="60.700" fill="#c26230"/><rect x="58.00" y="0" width="3.14" height="60.700" fill="#fdf552"/><rect x="61.10" y="0" width="5.94" height="60.700" fill="#c26230"/><rect x="67.00" y="0" width="2.14" height="60.700" fill="#d9cf42"/><rect x="69.10" y="0" width="1.14" height="60.700" fill="#93b3d4"/><rect x="70.20" y="0" width="4.84" height="60.700" fill="#fdf552"/><rect x="75.00" y="0" width="1.24" height="60.700" fill="#93b3d4"/><rect x="76.20" y="0" width="3.14" height="60.700" fill="#fdf552"/><rect x="79.30" y="0" width="2.84" height="60.700" fill="#93b3d4"/><rect x="82.10" y="0" width="1.74" height="60.700" fill="#c26230"/><rect x="83.80" y="0" width="1.24" height="60.700" fill="#93b3d4"/><rect x="85.00" y="0" width="1.74" height="60.700" fill="#c26230"/><rect x="86.70" y="0" width="4.54" height="60.700" fill="#fdf552"/><rect x="91.20" y="0" width="1.44" height="60.700" fill="#8c8c8c"/><rect x="92.60" y="0" width="1.54" height="60.700" fill="#c26230"/><rect x="94.10" y="0" width="1.94" height="60.700" fill="#d9cf42"/><rect x="96.00" y="0" width="1.24" height="60.700" fill="#93b3d4"/><rect x="97.20" y="0" width="1.64" height="60.700" fill="#c26230"/><rect x="98.80" y="0" width="6.14" height="60.700" fill="#fdf552"/><rect x="104.90" y="0" width="1.14" height="60.700" fill="#93b3d4"/><rect x="106.00" y="0" width="1.94" height="60.700" fill="#c26230"/><rect x="107.90" y="0" width="7.54" height="60.700" fill="#fdf552"/><rect x="115.40" y="0" width="1.44" height="60.700" fill="#8c8c8c"/><rect x="116.80" y="0" width="11.94" height="60.700" fill="#c26230"/><rect x="128.70" y="0" width="1.44" height="60.700" fill="#93b3d4"/><rect x="130.10" y="0" width="9.04" height="60.700" fill="#c26230"/><rect x="139.10" y="0" width="1.94" height="60.700" fill="#8c8c8c"/><rect x="141.00" y="0" width="4.04" height="60.700" fill="#c26230"/><rect x="145.00" y="0" width="2.14" height="60.700" fill="#d9cf42"/><rect x="147.10" y="0" width="2.74" height="60.700" fill="#c26230"/><rect x="149.80" y="0" width="1.49" height="60.700" fill="#fdf552"/><rect x="151.25" y="0" width="2.99" height="60.700" fill="#c26230"/><rect x="154.20" y="0" width="1.64" height="60.700" fill="#8c8c8c"/><rect x="155.80" y="0" width="3.24" height="60.700" fill="#fdf552"/><rect x="159.00" y="0" width="1.24" height="60.700" fill="#c26230"/><rect x="160.20" y="0" width="3.24" height="60.700" fill="#fdf552"/><rect x="163.40" y="0" width="2.89" height="60.700" fill="#93b3d4"/><rect x="166.25" y="0" width="3.19" height="60.700" fill="#fdf552"/><rect x="169.40" y="0" width="1.64" height="60.700" fill="#8c8c8c"/><rect x="171.00" y="0" width="1.14" height="60.700" fill="#c26230"/><rect x="172.10" y="0" width="8.04" height="60.700" fill="#fdf552"/><rect x="180.10" y="0" width="1.14" height="60.700" fill="#93b3d4"/><rect x="181.20" y="0" width="4.54" height="60.700" fill="#c26230"/><rect x="185.70" y="0" width="1.54" height="60.700" fill="#fdf552"/><rect x="187.20" y="0" width="4.64" height="60.700" fill="#c26230"/><rect x="191.80" y="0" width="1.34" height="60.700" fill="#93b3d4"/><rect x="193.10" y="0" width="1.74" height="60.700" fill="#c26230"/><rect x="194.80" y="0" width="1.49" height="60.700" fill="#fdf552"/><rect x="196.25" y="0" width="1.79" height="60.700" fill="#c26230"/><rect x="198.00" y="0" width="3.14" height="60.700" fill="#fdf552"/><rect x="201.10" y="0" width="2.44" height="60.700" fill="#93b3d4"/><rect x="203.50" y="0" width="3.44" height="60.700" fill="#fdf552"/><rect x="206.90" y="0" width="1.24" height="60.700" fill="#93b3d4"/><rect x="208.10" y="0" width="1.74" height="60.700" fill="#c26230"/><rect x="209.80" y="0" width="27.14" height="60.700" fill="#fdf552"/><rect x="236.90" y="0" width="1.14" height="60.700" fill="#93b3d4"/><rect x="238.00" y="0" width="2.14" height="60.700" fill="#d9cf42"/><rect x="240.10" y="0" width="3.94" height="60.700" fill="#c26230"/><rect x="244.00" y="0" width="5.04" height="60.700" fill="#fdf552"/><rect x="249.00" y="0" width="1.24" height="60.700" fill="#93b3d4"/><rect x="250.20" y="0" width="3.04" height="60.700" fill="#c26230"/><rect x="253.20" y="0" width="1.54" height="60.700" fill="#8c8c8c"/><rect x="254.70" y="0" width="10.64" height="60.700" fill="#fdf552"/><rect x="265.30" y="0" width="2.74" height="60.700" fill="#c26230"/><rect x="268.00" y="0" width="2.24" height="60.700" fill="#d9cf42"/><rect x="270.20" y="0" width="1.09" height="60.700" fill="#93b3d4"/><rect x="271.25" y="0" width="1.79" height="60.700" fill="#c26230"/><rect x="273.00" y="0" width="1.24" height="60.700" fill="#93b3d4"/><rect x="274.20" y="0" width="3.24" height="60.700" fill="#fdf552"/></svg>
<div class="t" style="left:8.00px;top:259.09px;font-size:19.50px;color:#fff;font-weight:400;letter-spacing:0.052px;"><span id="t14">GPU raster</span></div>
<div class="t" style="left:269.40px;top:284.06px;font-size:18.00px;color:#6fe84e;font-weight:400;letter-spacing:0.000px;"><span id="t15">on</span></div>
<div class="t" style="left:8.00px;top:313.79px;font-size:19.50px;color:#fff;font-weight:400;letter-spacing:-0.057px;"><span id="t16">GPU memory</span></div>
<div class="t" style="left:178.50px;top:333.16px;font-size:18.00px;color:#6fe8f0;font-weight:400;letter-spacing:-0.189px;"><span id="t17">15.6 MB used</span></div>
<div class="t" style="left:166.70px;top:357.46px;font-size:18.00px;color:#6fe8f0;font-weight:400;letter-spacing:-0.069px;"><span id="t18">536.9 MB max</span></div>
<svg style="position:absolute;left:34.00px;top:340.00px;" width="70" height="36" viewBox="0 0 70 36"><path d="M4 33.600a30 30 0 0 1 60 0z" fill="#5e5c2a"/><path d="M34 33.600L3 30.500 3 33.600z" fill="#63e03c"/><path d="M2 33.600h33" stroke="#2f6a22" stroke-width="1.200"/></svg>
<div style="position:absolute;left:1196px;top:0;width:50px;height:114px;background:linear-gradient(90deg,rgba(0,0,0,0),rgba(0,0,0,.012) 30%,rgba(0,0,0,.045) 60%,rgba(0,0,0,.135))"></div>
<div style="position:absolute;left:1181px;top:114px;width:65px;height:1401px;background:linear-gradient(90deg,rgba(0,0,0,0) 0,rgba(0,0,0,.015) 23%,rgba(0,0,0,.04) 38.500%,rgba(0,0,0,.085) 61.500%,rgba(0,0,0,.14) 78.500%,rgba(0,0,0,.2) 91%,rgba(0,0,0,.235) 100%)"></div>
<div style="position:absolute;left:1246.00px;top:0.00px;width:4.00px;height:1515.00px;background:linear-gradient(90deg,#4c4c4c,#6a6a6a);"></div>
<div style="position:absolute;left:0.00px;top:0.00px;width:2.00px;height:1515.00px;background:#6e6e6e;"></div>
<div style="position:absolute;left:1250.00px;top:0.00px;width:1245.00px;height:1515.00px;background:#f9fdfc;"></div>
<div style="position:absolute;left:1250.00px;top:0.00px;width:1245.00px;height:17.00px;background:#dfece9;"></div>
<div style="position:absolute;left:1250.00px;top:17.00px;width:1245.00px;height:1.00px;background:#a9ebe2;"></div>
<div class="clip" style="left:1250px;top:0;width:1245px;height:17px">
<div class="t" style="left:155.00px;top:-8.61px;font-size:17.50px;color:#3a4846;font-weight:400;letter-spacing:-0.008px;-webkit-text-stroke:.35px #3a4846;"><span id="t19">Elements</span></div>
<div class="t" style="left:259.80px;top:-8.61px;font-size:17.50px;color:#3a4846;font-weight:400;letter-spacing:-0.036px;-webkit-text-stroke:.35px #3a4846;"><span id="t20">Console</span></div>
<div class="t" style="left:355.70px;top:-8.61px;font-size:17.50px;color:#3a4846;font-weight:400;letter-spacing:0.485px;-webkit-text-stroke:.35px #3a4846;"><span id="t21">Components</span></div>
<div class="t" style="left:510.50px;top:-8.61px;font-size:17.50px;color:#3a4846;font-weight:400;letter-spacing:-0.284px;-webkit-text-stroke:.35px #3a4846;"><span id="t22">Sources</span></div>
<div class="t" style="left:603.80px;top:-8.61px;font-size:17.50px;color:#3a4846;font-weight:400;letter-spacing:1.052px;-webkit-text-stroke:.35px #3a4846;"><span id="t23">Network</span></div>
<div class="t" style="left:705.00px;top:-8.61px;font-size:17.50px;color:#3a4846;font-weight:400;letter-spacing:0.728px;-webkit-text-stroke:.35px #3a4846;"><span id="t24">Application</span></div>
<div class="t" style="left:829.80px;top:-8.61px;font-size:17.50px;color:#3a4846;font-weight:400;letter-spacing:0.309px;-webkit-text-stroke:.35px #3a4846;"><span id="t25">Profiler</span></div>
<div class="t" style="left:939.80px;top:-8.61px;font-size:17.50px;color:#1f6b64;font-weight:400;letter-spacing:-0.526px;-webkit-text-stroke:.35px #1f6b64;"><span id="t26">Layers</span></div>
<div class="t" style="left:1089.00px;top:-9.30px;font-size:15.00px;color:#3a4846;font-weight:400;letter-spacing:0.000px;"><span id="t27">1</span></div>
<div class="t" style="left:1127.00px;top:-9.30px;font-size:15.00px;color:#3a4846;font-weight:400;letter-spacing:0.000px;"><span id="t28">4</span></div>
<svg style="position:absolute;left:0;top:0" width="1245" height="17" viewBox="1250 0 1245 17"><path d="M1271-6l0 12M1271-5l12 11" fill="none" stroke="#3a4846" stroke-width="2"/><rect x="1263.500" y="1.500" width="2" height="2" fill="#3a4846"/><rect x="1263.500" y="5" width="2" height="2" fill="#3a4846"/><rect x="1267" y="5" width="2" height="2" fill="#3a4846"/><path d="M1304 5h11M1309.500-4v9M1318-6v10h9v-10" fill="none" stroke="#3a4846" stroke-width="2.200"/><path d="M1346.500-5V3.200L1358 9.800 1369.500 3.200V-5z" fill="#7dab70"/><path d="M1358-5v14.800l11.500-6.600V-5z" fill="#9ac58b"/><path d="M1352-5l6 14.800" stroke="#6a9a60" stroke-width="1"/><rect x="1384.800" y="-4" width="1.800" height="12.800" fill="#a9ebe2"/><g fill="none" stroke="#3a4846" stroke-width=".9"><ellipse cx="1722" cy="-1" rx="5" ry="2"/><ellipse cx="1722" cy="-1" rx="5" ry="2" transform="rotate(60 1722 -1)"/><ellipse cx="1722" cy="-1" rx="5" ry="2" transform="rotate(120 1722 -1)"/><ellipse cx="2151.400" cy="-1" rx="5" ry="2"/><ellipse cx="2151.400" cy="-1" rx="5" ry="2" transform="rotate(60 2151.400 -1)"/><ellipse cx="2151.400" cy="-1" rx="5" ry="2" transform="rotate(120 2151.400 -1)"/></g><path d="M2247-6l9.500 9.500M2256.500-6l-9.500 9.500" stroke="#3a4846" stroke-width="1.700"/><path d="M2284.500-2l-6 6.200M2294-2l-6.200 6.200" fill="none" stroke="#3a4846" stroke-width="1.700"/><path d="M2314.500 2.600l10.500-19 10.500 19z" fill="#e8792f"/><circle cx="2325" cy="0" r="1.100" fill="#fff"/><path d="M2359.500-8h15v9.500h-11l-4 2.800z" fill="#e0463c"/><rect x="2401" y="-4" width="1.200" height="12.500" fill="#a9e6dd"/><g transform="translate(2429 -3.500)"><circle r="7.300" fill="none" stroke="#3a4846" stroke-width="2.300"/><g fill="#3a4846"><rect x="-2.800" y="7.200" width="5.600" height="3.800" rx=".6"/><rect x="-2.800" y="7.200" width="5.600" height="3.800" rx=".6" transform="rotate(60)"/><rect x="-2.800" y="7.200" width="5.600" height="3.800" rx=".6" transform="rotate(-60)"/></g></g><circle cx="2471" cy="3.800" r="2.200" fill="#3a4846"/></svg>
<div style="position:absolute;left:924.50px;top:14.50px;width:97.00px;height:3.50px;background:#1f6b64;border-radius:3px 3px 0 0;"></div>
</div>
<div style="position:absolute;left:1587.00px;top:18.00px;width:1.00px;height:1119.00px;background:#a9ebe2;"></div>
<div style="position:absolute;left:1250.00px;top:165.50px;width:337.00px;height:24.00px;background:#e8eeed;"></div>
<div class="clip" style="left:1250px;top:18px;width:337px;height:1070px">
<div class="t" style="left:30.30px;top:8.59px;font-size:17.50px;color:#1f2a29;font-weight:400;letter-spacing:-0.001px;"><span id="t29">#76328</span></div>
<div class="t" style="left:89.20px;top:8.59px;font-size:17.50px;color:#85908e;font-weight:400;letter-spacing:0.070px;"><span id="t30">(0 × 0)</span></div>
<div class="t" style="left:48.40px;top:32.59px;font-size:17.50px;color:#1f2a29;font-weight:400;letter-spacing:0.551px;"><span id="t31">#document</span></div>
<div class="t" style="left:139.90px;top:32.59px;font-size:17.50px;color:#85908e;font-weight:400;letter-spacing:0.003px;"><span id="t32">(1245 × 1409)</span></div>
<div class="t" style="left:48.40px;top:56.59px;font-size:17.50px;color:#1f2a29;font-weight:400;letter-spacing:0.176px;"><span id="t33">.absolute.overflow-visible.overscroll-</span><span>none</span></div>
<div class="t" style="left:48.40px;top:80.59px;font-size:17.50px;color:#1f2a29;font-weight:400;letter-spacing:0.092px;"><span id="t34">.overflow-visible.absolute.contain-lay</span><span>out</span></div>
<div class="t" style="left:48.40px;top:104.59px;font-size:17.50px;color:#1f2a29;font-weight:400;letter-spacing:0.092px;"><span id="t35">.overflow-visible.absolute.contain-lay</span><span>out</span></div>
<div class="t" style="left:48.40px;top:128.59px;font-size:17.50px;color:#1f2a29;font-weight:400;letter-spacing:0.092px;"><span id="t36">.overflow-visible.absolute.contain-lay</span><span>out</span></div>
<div class="t" style="left:48.40px;top:152.59px;font-size:17.50px;color:#4a5654;font-weight:400;letter-spacing:0.092px;"><span id="t37">.overflow-visible.absolute.contain-lay</span><span>out</span></div>
<div class="t" style="left:48.40px;top:176.59px;font-size:17.50px;color:#1f2a29;font-weight:400;letter-spacing:0.334px;"><span id="t38">.fixed.anchor-to-gameMain.left-\[cal</span><span>c(</span></div>
<div class="t" style="left:48.40px;top:200.59px;font-size:17.50px;color:#1f2a29;font-weight:400;letter-spacing:0.169px;"><span id="t39">.fixed.anchor-to-gameMain.right-\[ca</span><span>lc(</span></div>
<div class="t" style="left:48.40px;top:224.59px;font-size:17.50px;color:#1f2a29;font-weight:400;letter-spacing:0.329px;"><span id="t40">.flex.flex-col.\[grid-area\:bottom\].z-</span><span>10</span></div>
<svg style="position:absolute;left:15px;top:12.300px" width="12" height="8" viewBox="0 0 12 8"><path d="M.5.8h10.600L5.800 7.200z" fill="#2b3634"/></svg>
</div>
<svg style="position:absolute;left:1255.50px;top:1080.50px;" width="12" height="14" viewBox="0 0 12 14"><path d="M11.200.2v13.600L.7 7z" fill="#8a8a8a"/></svg>
<svg style="position:absolute;left:1569.50px;top:1080.50px;" width="12" height="14" viewBox="0 0 12 14"><path d="M.8.200v13.600L11.300 7z" fill="#8a8a8a"/></svg>
<div style="position:absolute;left:1277.00px;top:1081.00px;width:38.00px;height:13.00px;background:#8a8a8a;border-radius:6.500px;"></div>
<div style="position:absolute;left:1250.00px;top:1099.30px;width:337.00px;height:1.00px;background:#a9ebe2;"></div>
<div class="t" style="left:1266.00px;top:1110.69px;font-size:17.50px;color:#1f2a29;font-weight:400;letter-spacing:-0.277px;"><span id="t41">10 layers</span></div>
<div class="t" style="left:1512.00px;top:1110.69px;font-size:17.50px;color:#1f2a29;font-weight:400;letter-spacing:-0.222px;"><span id="t42">189 MB</span></div>
<div style="position:absolute;left:1588.00px;top:57.30px;width:907.00px;height:1.00px;background:#a9ebe2;"></div>
<svg style="position:absolute;left:1600.00px;top:26.00px;" width="24" height="24" viewBox="0 0 24 24"><g fill="none" stroke="#2f7d72" stroke-width="2"><path d="M12 4v16M4 12h16"/></g><path d="M12 .8l4.300 5H7.700zM12 23.200l4.300-5H7.700zM.8 12l5-4.300v8.600zM23.200 12l-5-4.300v8.600z" fill="#2f7d72"/></svg>
<svg style="position:absolute;left:1641.80px;top:26.00px;" width="24" height="24" viewBox="0 0 24 24"><path d="M9.300 17C4.800 16.300 1.600 14.200 1.600 11.700c0-3 4.700-5.400 10.400-5.400s10.400 2.400 10.400 5.400c0 2-2.200 3.800-5.500 4.700" fill="none" stroke="#3a4846" stroke-width="2"/><path d="M6.300 13.300l3.600 3.800-4.300 2.900" fill="none" stroke="#3a4846" stroke-width="2"/></svg>
<svg style="position:absolute;left:1683.80px;top:26.00px;" width="24" height="24" viewBox="0 0 24 24"><g fill="none" stroke="#3a4846" stroke-width="2.100"><path d="M2.800 2.800l5 5M21.200 2.800l-5 5M2.800 21.200l5-5M21.200 21.200l-5-5"/></g><path d="M9.800 3.600v6.200H3.600zM14.200 3.600v6.200h6.200zM9.800 20.400v-6.200H3.600zM14.200 20.400v-6.200h6.200z" fill="#3a4846"/></svg>
<div style="position:absolute;left:1726.00px;top:29.00px;width:18.00px;height:18.00px;background:#fff;border-radius:4px;box-sizing:border-box;border:1.700px solid #737b7a;"></div>
<div class="t" style="left:1753.80px;top:31.09px;font-size:17.50px;color:#3a4846;font-weight:400;letter-spacing:-0.688px;"><span id="t43">Paints</span></div>
<div style="position:absolute;left:1816.00px;top:29.00px;width:18.00px;height:18.00px;background:#fff;border-radius:4px;box-sizing:border-box;border:1.700px solid #737b7a;"></div>
<div class="t" style="left:1844.00px;top:31.09px;font-size:17.50px;color:#3a4846;font-weight:400;letter-spacing:-0.070px;"><span id="t44">Slow scroll rects</span></div>
<svg style="position:absolute;left:1760px;top:125px" width="140" height="145" viewBox="1760 125 140 145"><g fill="none" stroke="#0c0c0c" stroke-width="1.500" stroke-linejoin="round"><rect x="1772" y="135.900" width="108.300" height="121.500"/><path d="M1780.900 251.800V152h87.200v99.800M1772 251.800h108.300"/><rect x="1781.500" y="198.800" width="6.300" height="3.200" rx="1.200"/><rect x="1779.900" y="201" width="5.500" height="4.100" rx=".8"/><rect x="1863.700" y="198.600" width="5" height="4" rx="1.500"/><rect x="1773" y="246" width="4.600" height="4.800"/><rect x="1874.200" y="246" width="4.800" height="4.800"/></g><ellipse cx="1864.500" cy="203.800" rx="3.800" ry="1.700" fill="none" stroke="#7ee048" stroke-width="1.200"/></svg>
<div style="position:absolute;left:1588.00px;top:836.00px;width:907.00px;height:41.50px;background:#dfece9;"></div>
<div style="position:absolute;left:1588.00px;top:835.50px;width:907.00px;height:1.00px;background:#a9ebe2;"></div>
<div style="position:absolute;left:1588.00px;top:877.00px;width:907.00px;height:1.00px;background:#a9ebe2;"></div>
<div class="t" style="left:1603.60px;top:851.79px;font-size:17.50px;color:#1f6b64;font-weight:400;letter-spacing:0.183px;-webkit-text-stroke:.35px #1f6b64;"><span id="t45">Details</span></div>
<div style="position:absolute;left:1588.00px;top:875.00px;width:87.00px;height:4.00px;background:#1f6b64;border-radius:3px 3px 0 0;"></div>
<div class="t" style="left:1600.50px;top:890.31px;font-size:17.00px;color:#333f3d;font-weight:400;letter-spacing:-1.326px;-webkit-text-stroke:.3px #333f3d;"><span id="t46">Size</span></div>
<div class="t" style="left:1812.70px;top:889.89px;font-size:17.50px;color:#1f2a29;font-weight:400;letter-spacing:0.032px;"><span id="t47">467 × 180 (at 0, 0)</span></div>
<div class="t" style="left:1600.50px;top:929.31px;font-size:17.00px;color:#333f3d;font-weight:400;letter-spacing:-0.306px;-webkit-text-stroke:.3px #333f3d;"><span id="t48">Compositing Reasons</span></div>
<div class="t" style="left:1812.70px;top:928.89px;font-size:17.50px;color:#1f2a29;font-weight:400;letter-spacing:0.271px;"><span id="t49">Overlaps other composited content.</span></div>
<div class="t" style="left:1600.50px;top:968.31px;font-size:17.00px;color:#333f3d;font-weight:400;letter-spacing:0.095px;-webkit-text-stroke:.3px #333f3d;"><span id="t50">Memory estimate</span></div>
<div class="t" style="left:1812.70px;top:967.89px;font-size:17.50px;color:#1f2a29;font-weight:400;letter-spacing:-0.357px;"><span id="t51">336 kB</span></div>
<div class="t" style="left:1600.50px;top:1007.31px;font-size:17.00px;color:#333f3d;font-weight:400;letter-spacing:-0.056px;-webkit-text-stroke:.3px #333f3d;"><span id="t52">Paint count</span></div>
<div class="t" style="left:1812.70px;top:1006.89px;font-size:17.50px;color:#1f2a29;font-weight:400;letter-spacing:0.000px;"><span id="t53">1</span></div>
<div class="t" style="left:1600.50px;top:1046.31px;font-size:17.00px;color:#333f3d;font-weight:400;letter-spacing:-0.152px;-webkit-text-stroke:.3px #333f3d;"><span id="t54">Slow scroll regions</span></div>
<div class="t" style="left:1812.70px;top:1045.89px;font-size:17.50px;color:#1f2a29;font-weight:400;letter-spacing:0.152px;"><span id="t55">Touch event handler 469 × 182 (at -1, -1), Wheel event handler 469 × 182 (at -1, -1)</span></div>
<div class="t" style="left:1600.50px;top:1085.31px;font-size:17.00px;color:#333f3d;font-weight:400;letter-spacing:0.040px;-webkit-text-stroke:.3px #333f3d;"><span id="t56">Sticky position constraint</span></div>
<div style="position:absolute;left:1250.00px;top:1136.30px;width:1245.00px;height:1.00px;background:#a9ebe2;"></div>
<div style="position:absolute;left:1250.00px;top:1137.30px;width:1245.00px;height:40.50px;background:#dfece9;"></div>
<div style="position:absolute;left:1250.00px;top:1177.50px;width:1245.00px;height:1.00px;background:#a9ebe2;"></div>
<div style="position:absolute;left:1271.80px;top:1148.70px;width:4.00px;height:4.00px;background:#3a4846;border-radius:50%;"></div>
<div style="position:absolute;left:1271.80px;top:1156.50px;width:4.00px;height:4.00px;background:#3a4846;border-radius:50%;"></div>
<div style="position:absolute;left:1271.80px;top:1164.30px;width:4.00px;height:4.00px;background:#3a4846;border-radius:50%;"></div>
<div class="t" style="left:1307.00px;top:1151.29px;font-size:17.50px;color:#3a4846;font-weight:400;letter-spacing:0.130px;-webkit-text-stroke:.35px #3a4846;"><span id="t57">Console</span></div>
<div class="t" style="left:1403.10px;top:1151.29px;font-size:17.50px;color:#3a4846;font-weight:400;letter-spacing:0.953px;-webkit-text-stroke:.35px #3a4846;"><span id="t58">Autofill</span></div>
<div class="t" style="left:1508.30px;top:1151.29px;font-size:17.50px;color:#3a4846;font-weight:400;letter-spacing:0.399px;-webkit-text-stroke:.35px #3a4846;"><span id="t59">What's new</span></div>
<div class="t" style="left:1648.30px;top:1151.29px;font-size:17.50px;color:#3a4846;font-weight:400;letter-spacing:-0.098px;-webkit-text-stroke:.35px #3a4846;"><span id="t60">AI assistance</span></div>
<div class="t" style="left:1824.90px;top:1151.29px;font-size:17.50px;color:#3a4846;font-weight:400;letter-spacing:0.572px;-webkit-text-stroke:.35px #3a4846;"><span id="t61">Performance monitor</span></div>
<div class="t" style="left:2045.40px;top:1151.29px;font-size:17.50px;color:#3a4846;font-weight:400;letter-spacing:0.591px;-webkit-text-stroke:.35px #3a4846;"><span id="t62">Animations</span></div>
<div class="t" style="left:2183.60px;top:1151.29px;font-size:17.50px;color:#1f6b64;font-weight:400;letter-spacing:0.206px;-webkit-text-stroke:.35px #1f6b64;"><span id="t63">Rendering</span></div>
<div class="t" style="left:2312.10px;top:1151.29px;font-size:17.50px;color:#3a4846;font-weight:400;letter-spacing:-0.301px;-webkit-text-stroke:.35px #3a4846;"><span id="t64">Sensors</span></div>
<svg style="position:absolute;left:1757.00px;top:1150.00px;" width="18" height="18" viewBox="0 0 18 18"><path d="M6.500 1.500h5M7.500 1.500v5.500L2.500 15.500a.8.800 0 0 0 .7 1.200h11.600a.8.800 0 0 0 .7-1.200L10.500 7V1.500" fill="none" stroke="#3a4846" stroke-width="1.500" stroke-linejoin="round"/></svg>
<svg style="position:absolute;left:2273.00px;top:1152.50px;" width="13" height="13" viewBox="0 0 13 13"><path d="M1.500 1.500l10 10M11.500 1.500l-10 10" stroke="#3a4846" stroke-width="1.600"/></svg>
<div style="position:absolute;left:2168.00px;top:1174.50px;width:128.60px;height:3.50px;background:#1f6b64;border-radius:3px 3px 0 0;"></div>
<svg style="position:absolute;left:2410.00px;top:1149.40px;" width="20" height="15" viewBox="0 0 20 15"><path d="M2 1.300l7.300 6.200-7.300 6.200M10.700 1.300l7.300 6.200-7.300 6.200" fill="none" stroke="#56605e" stroke-width="2"/></svg>
<svg style="position:absolute;left:2462.50px;top:1148.50px;" width="17" height="17" viewBox="0 0 17 17"><path d="M1.700 1.700l13.600 13.600M15.300 1.700l-13.600 13.600" stroke="#333d3b" stroke-width="2.100"/></svg>
<div class="t" style="left:1304.40px;top:1200.99px;font-size:17.50px;color:#1f2a29;font-weight:400;letter-spacing:0.048px;"><span id="t65">Paint flashing</span></div>
<div class="t" style="left:1304.40px;top:1225.09px;font-size:17.50px;color:#8b9795;font-weight:400;letter-spacing:0.270px;"><span id="t66">Highlights areas of the page (green) that need to be repainted. May not be suitable for people prone to photosensitive epilepsy.</span></div>
<div style="position:absolute;left:1277.00px;top:1211.00px;width:18.00px;height:18.00px;background:#fff;border-radius:4px;box-sizing:border-box;border:1.700px solid #737b7a;"></div>
<div class="t" style="left:1304.40px;top:1263.99px;font-size:17.50px;color:#1f2a29;font-weight:400;letter-spacing:0.202px;"><span id="t67">Layout shift regions</span></div>
<div class="t" style="left:1304.40px;top:1288.09px;font-size:17.50px;color:#8b9795;font-weight:400;letter-spacing:0.261px;"><span id="t68">Highlights areas of the page (blue) that were shifted. May not be suitable for people prone to photosensitive epilepsy.</span></div>
<div style="position:absolute;left:1277.00px;top:1274.00px;width:18.00px;height:18.00px;background:#fff;border-radius:4px;box-sizing:border-box;border:1.700px solid #737b7a;"></div>
<div class="t" style="left:1304.40px;top:1326.99px;font-size:17.50px;color:#1f2a29;font-weight:400;letter-spacing:-0.040px;"><span id="t69">Layer borders</span></div>
<div class="t" style="left:1304.40px;top:1351.09px;font-size:17.50px;color:#8b9795;font-weight:400;letter-spacing:0.077px;"><span id="t70">Shows layer borders (orange/olive) and tiles (cyan).</span></div>
<div style="position:absolute;left:1277.00px;top:1337.00px;width:18.00px;height:18.00px;background:#2f7d72;border-radius:3.500px;"></div>
<svg style="position:absolute;left:1277.00px;top:1337.00px;" width="18" height="18" viewBox="0 0 18 18"><path d="M3.800 9.300l3.600 3.600 6.800-7.400" fill="none" stroke="#fff" stroke-width="2.200"/></svg>
<div class="t" style="left:1304.40px;top:1389.99px;font-size:17.50px;color:#1f2a29;font-weight:400;letter-spacing:-0.161px;"><span id="t71">Frame Rendering Stats</span></div>
<div class="t" style="left:1304.40px;top:1414.09px;font-size:17.50px;color:#8b9795;font-weight:400;letter-spacing:0.268px;"><span id="t72">Plots frame throughput, dropped frames distribution, and GPU memory.</span></div>
<div style="position:absolute;left:1277.00px;top:1400.00px;width:18.00px;height:18.00px;background:#2f7d72;border-radius:3.500px;"></div>
<svg style="position:absolute;left:1277.00px;top:1400.00px;" width="18" height="18" viewBox="0 0 18 18"><path d="M3.800 9.300l3.600 3.600 6.800-7.400" fill="none" stroke="#fff" stroke-width="2.200"/></svg>
<div class="t" style="left:1304.40px;top:1452.99px;font-size:17.50px;color:#1f2a29;font-weight:400;letter-spacing:0.049px;"><span id="t73">Scrolling performance issues</span></div>
<div class="t" style="left:1304.40px;top:1477.09px;font-size:17.50px;color:#8b9795;font-weight:400;letter-spacing:0.261px;"><span id="t74">Highlights elements (teal) that can slow down scrolling, including touch &amp; wheel event handlers and other main-thread scrolling situations.</span></div>
<div style="position:absolute;left:1277.00px;top:1463.00px;width:18.00px;height:18.00px;background:#fff;border-radius:4px;box-sizing:border-box;border:1.700px solid #737b7a;"></div>
<svg style="position:absolute;left:2476.00px;top:1184.00px;" width="16" height="12" viewBox="0 0 16 12"><path d="M7.600 1.200L14.300 10.600H.9z" fill="#8a8a8a" stroke="#8a8a8a" stroke-width="1.200" stroke-linejoin="round"/></svg>
<div style="position:absolute;left:2477.10px;top:1205.00px;width:13.00px;height:53.00px;background:#8a8a8a;border-radius:6.500px;"></div>
<svg style="position:absolute;left:2476.00px;top:1508.00px;" width="16" height="12" viewBox="0 0 16 12"><path d="M7.600 10.800L14.300 1.400H.9z" fill="#8a8a8a" stroke="#8a8a8a" stroke-width="1.200" stroke-linejoin="round"/></svg>
<div style="position:absolute;left:2493.90px;top:0.00px;width:1.10px;height:1515.00px;background:#7a7e7d;"></div>
</body></html>
